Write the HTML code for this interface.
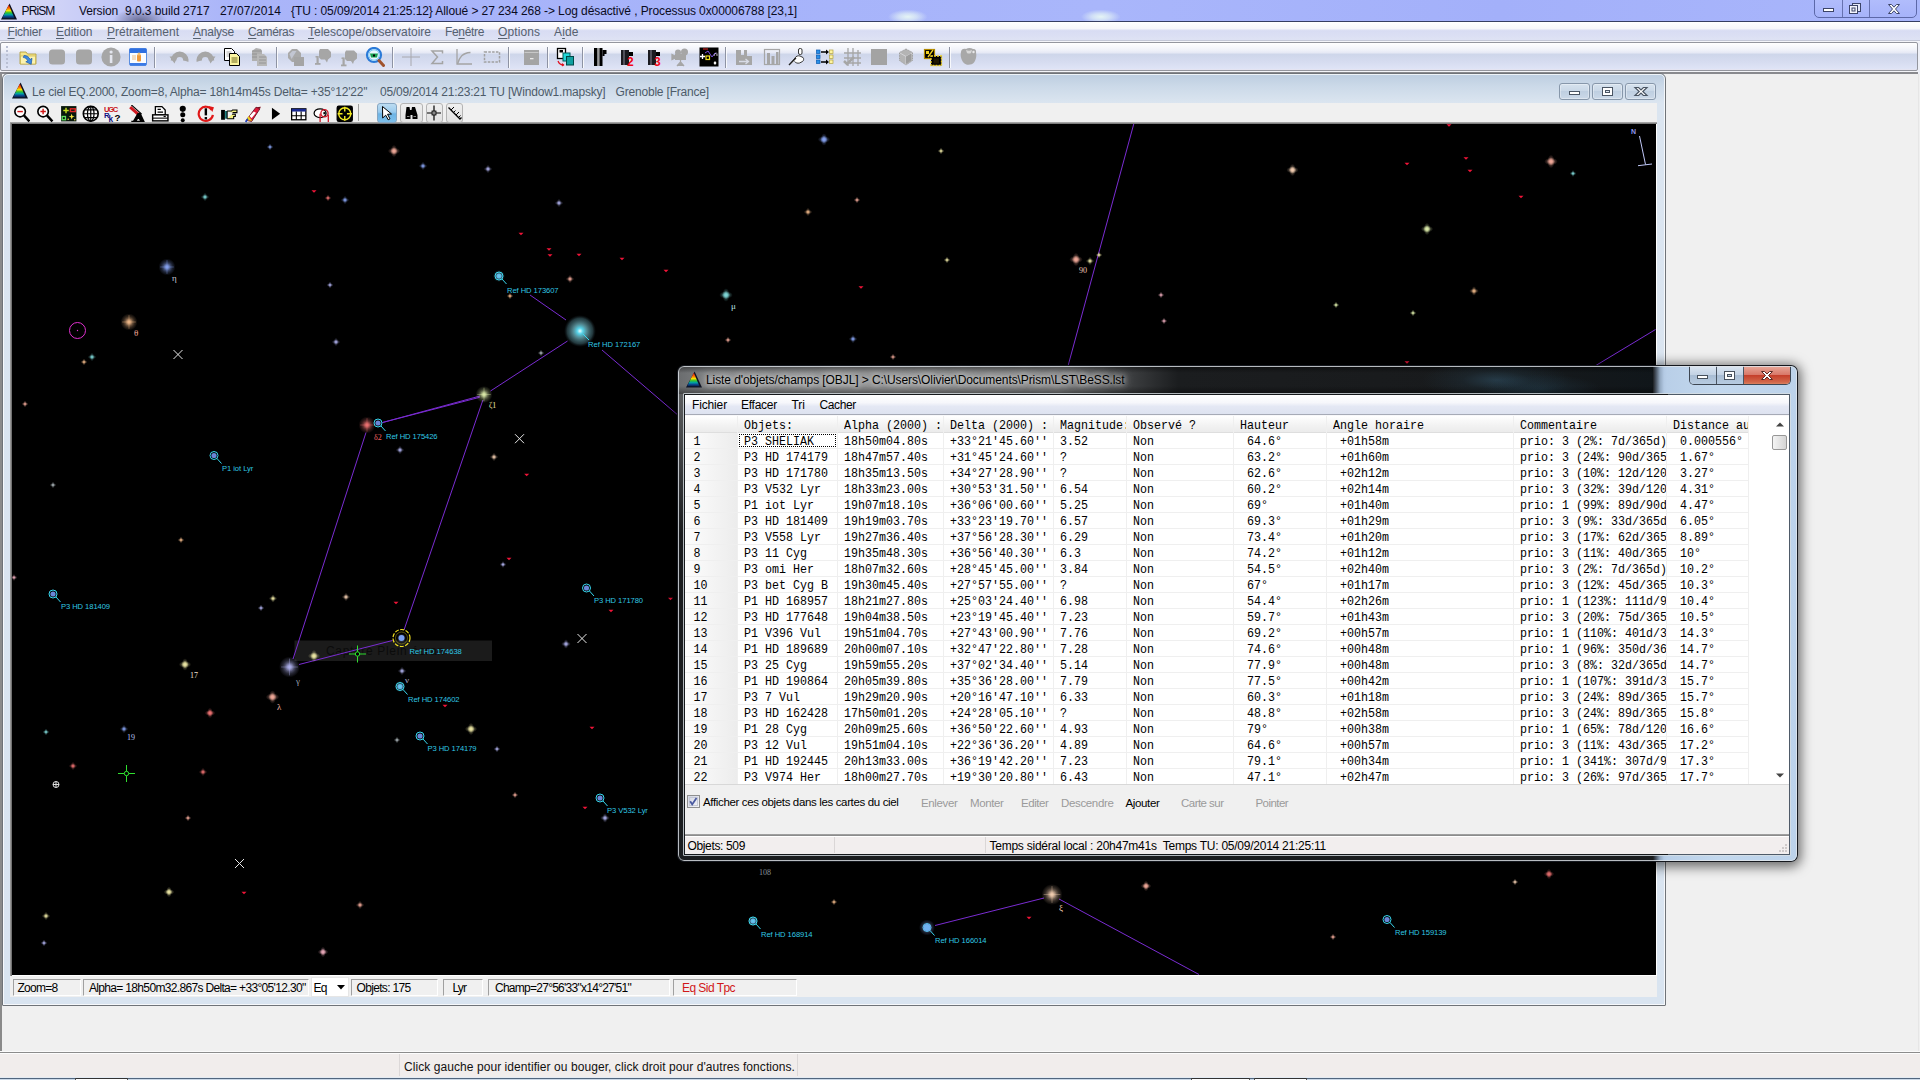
<!DOCTYPE html>
<html lang="fr"><head><meta charset="utf-8"><title>PRiSM</title>
<style>
html,body{margin:0;padding:0;}
body{width:1920px;height:1080px;overflow:hidden;position:relative;background:#f0f0f0;font-family:"Liberation Sans",sans-serif;font-size:12px;}
div,span,svg{position:absolute;box-sizing:border-box;}
span{white-space:pre;}
u{text-decoration:underline;text-underline-offset:1.5px;text-decoration-thickness:1px;}
.mono span{transform:scaleY(1.06);transform-origin:0 9.1px;font-family:"Liberation Mono",monospace;font-size:11.667px;line-height:12px;color:#000;}

.pnl{border:1px solid;border-color:#a0a0a0 #fff #fff #a0a0a0;background:#f0f0f0;}
.cb{border:1px solid #8797aa;border-radius:3px;background:linear-gradient(#d6e2ee 0%,#cad8e7 45%,#bfcfe1 50%,#cbd9e8 100%);box-shadow:inset 0 0 0 1px rgba(255,255,255,.35);}

.gl{background:#efefef;}
</style></head>
<body>
<div id="mtitle" style="left:0;top:0;width:1920px;height:21px;background:linear-gradient(90deg,#d9daf6 0px,#cfd2f7 60px,#bcc3f7 130px,#aab5f9 230px,#a6b3fa 700px,#a9b6fb 1100px,#a3b0fa 1500px,#a9b6fb 1920px);"></div>
<div style="left:888px;top:6px;width:44px;height:18px;background:radial-gradient(ellipse closest-side at 45% 60%,rgba(232,248,244,.95) 0%,rgba(225,240,245,.7) 45%,rgba(200,215,250,0) 100%);"></div>
<div style="left:1081px;top:6px;width:44px;height:18px;background:radial-gradient(ellipse closest-side at 45% 60%,rgba(232,248,244,.95) 0%,rgba(225,240,245,.7) 45%,rgba(200,215,250,0) 100%);"></div>
<div style="left:960px;top:14px;width:80px;height:8px;background:radial-gradient(ellipse closest-side at 50%% 100%%,rgba(110,110,230,.5) 0%%,rgba(120,120,230,0) 100%%);"></div>
<div style="left:112px;top:8px;width:56px;height:13px;background:radial-gradient(ellipse at 50% 100%,rgba(50,50,80,.6) 0%,rgba(60,60,90,0) 70%);"></div>
<div style="left:0;top:21px;width:1920px;height:1px;background:#363e62;"></div>
<svg style="left:1px;top:3px" width="16" height="17" viewBox="0 0 16 17"><defs><linearGradient id="pg1003" x1="0" y1="0" x2="0" y2="1"><stop offset="0" stop-color="#d81010"/><stop offset=".25" stop-color="#ff6a00"/><stop offset=".42" stop-color="#f4e400"/><stop offset=".58" stop-color="#30c030"/><stop offset=".72" stop-color="#00a0a8"/><stop offset=".85" stop-color="#0a4a90"/><stop offset="1" stop-color="#0a1a40"/></linearGradient></defs><path d="M8.600 0.500L16 16.500H0z" fill="#0c1020"/><path d="M7.800 1.800L13.600 15.500H1z" fill="url(#pg1003)"/></svg>
<span style="left:21.50px;top:4.84px;font-size:12px;line-height:12px;color:#0b0b1e;letter-spacing:-0.868px;">PRiSM</span>
<span style="left:79.00px;top:4.84px;font-size:12px;line-height:12px;color:#0b0b1e;letter-spacing:-0.147px;">Version</span>
<span style="left:125.00px;top:4.84px;font-size:12px;line-height:12px;color:#0b0b1e;letter-spacing:-0.057px;">9.0.3 build 2717</span>
<span style="left:220.00px;top:4.84px;font-size:12px;line-height:12px;color:#0b0b1e;letter-spacing:0.094px;">27/07/2014</span>
<span style="left:291.00px;top:4.84px;font-size:12px;line-height:12px;color:#0b0b1e;letter-spacing:-0.090px;">{TU : 05/09/2014 21:25:12} Alloué &gt; 27 234 268 -&gt; Log désactivé , Processus 0x00006788 [23,1]</span>
<div style="left:1814px;top:-4px;width:103px;height:22px;border:1px solid #5c68a8;border-radius:0 0 5px 5px;background:linear-gradient(#b3befc,#a6b3fa);"></div>
<div style="left:1842px;top:0;width:1px;height:17px;background:#6772b0;"></div>
<div style="left:1869px;top:0;width:1px;height:17px;background:#6772b0;"></div>
<svg style="left:1814px;top:0" width="103" height="18" viewBox="0 0 103 18"><rect x="9.5" y="8.5" width="10" height="3" fill="#fff" stroke="#3c4468" stroke-width="1"/><rect x="38.5" y="3.5" width="8" height="8" fill="#e6e9f8" stroke="#3c4468"/><rect x="35.500" y="5.500" width="8" height="8" fill="#f4f5fc" stroke="#3c4468"/><rect x="38" y="8" width="3" height="3" fill="none" stroke="#3c4468"/><path d="M74.500 4.500h3l2.500 2.700 2.500-2.700h3l-4 4.500 4 4.500h-3l-2.500-2.700-2.500 2.700h-3l4-4.500z" fill="#fff" stroke="#3c4468" stroke-width="1"/></svg>
<div style="left:0;top:22px;width:1920px;height:19px;background:linear-gradient(#ffffff 0%,#f6f6fa 36%,#e2e5f5 41%,#d8dcf3 46%,#dfe3f4 100%);"></div>
<div style="left:0;top:40px;width:1920px;height:1px;background:#c3c7d6;"></div>
<div style="left:0;top:41px;width:1920px;height:1px;background:#f4f5fa;"></div>
<span style="left:7.5px;top:25.84px;font-size:12px;line-height:12px;color:#56616f;letter-spacing:-0.215px"><u>F</u>ichier</span>
<span style="left:56px;top:25.84px;font-size:12px;line-height:12px;color:#56616f;letter-spacing:-0.028px"><u>E</u>dition</span>
<span style="left:107px;top:25.84px;font-size:12px;line-height:12px;color:#56616f;letter-spacing:-0.002px"><u>P</u>rétraitement</span>
<span style="left:193px;top:25.84px;font-size:12px;line-height:12px;color:#56616f;letter-spacing:-0.242px"><u>A</u>nalyse</span>
<span style="left:248px;top:25.84px;font-size:12px;line-height:12px;color:#56616f;letter-spacing:-0.383px"><u>C</u>améras</span>
<span style="left:308px;top:25.84px;font-size:12px;line-height:12px;color:#56616f;letter-spacing:-0.019px"><u>T</u>elescope/observatoire</span>
<span style="left:445px;top:25.84px;font-size:12px;line-height:12px;color:#56616f;letter-spacing:-0.337px">Fe<u>n</u>être</span>
<span style="left:498px;top:25.84px;font-size:12px;line-height:12px;color:#56616f;letter-spacing:0.092px"><u>O</u>ptions</span>
<span style="left:554px;top:25.84px;font-size:12px;line-height:12px;color:#56616f;letter-spacing:0.120px">A<u>i</u>de</span>
<div style="left:0;top:42px;width:1920px;height:32px;background:#eef0f7;"></div>
<div style="left:0px;top:42px;width:1918px;height:29px;border:1px solid #94969e;border-radius:2px;background:linear-gradient(#ffffff 0%,#f0f2f9 26%,#e6e9f5 36%,#ced6ea 42%,#d6dcf0 70%,#dfe4f6 96%,#e8e4ee 100%);"></div>
<div style="left:0px;top:71px;width:1918px;height:1px;background:#f3f4f8;"></div>
<div style="left:0px;top:72px;width:1918px;height:1.500px;background:#898a8e;"></div>
<div style="left:6px;top:46px;width:2px;height:2px;background:#b9bfd3;"></div>
<div style="left:6px;top:50px;width:2px;height:2px;background:#b9bfd3;"></div>
<div style="left:6px;top:54px;width:2px;height:2px;background:#b9bfd3;"></div>
<div style="left:6px;top:58px;width:2px;height:2px;background:#b9bfd3;"></div>
<div style="left:6px;top:62px;width:2px;height:2px;background:#b9bfd3;"></div>
<div style="left:6px;top:66px;width:2px;height:2px;background:#b9bfd3;"></div>
<div style="left:0;top:74px;width:1920px;height:978px;background:#f0f0f0;"></div>
<div style="left:0;top:74px;width:1.500px;height:978px;background:#8a8a8a;"></div>
<div style="left:0;top:1051px;width:1920px;height:3px;background:linear-gradient(#fbfbfb 0,#fbfbfb 33%,#8c8c8c 33%,#8c8c8c 67%,#fdfdfd 67%);"></div>
<div style="left:1918px;top:74px;width:1px;height:977px;background:#e6e6e6;"></div>
<div style="left:0;top:1054px;width:1920px;height:23px;background:#f1edec;"></div>
<div style="left:399px;top:1054px;width:1px;height:22px;background:#dcd8d8;"></div>
<div style="left:797px;top:1054px;width:1px;height:22px;background:#dcd8d8;"></div>
<span style="left:404.00px;top:1060.84px;font-size:12px;line-height:12px;color:#111;letter-spacing:0.068px;">Click gauche pour identifier ou bouger, click droit pour d'autres fonctions.</span>
<div style="left:0;top:1077px;width:1920px;height:3px;background:linear-gradient(#e4ebf3 0,#e4ebf3 33%,#52667e 40%,#52667e 67%,#cbd9e8 72%);"></div>
<div style="left:75px;top:1078px;width:53px;height:2px;background:#fff;border-top:1px solid #333;border-left:1px solid #555;border-right:1px solid #555;"></div>
<div style="left:1191px;top:1078px;width:59px;height:2px;background:#fff;border-top:1px solid #333;border-left:1px solid #555;border-right:1px solid #555;"></div>
<div style="left:1254px;top:1078px;width:53px;height:2px;background:#fff;border-top:1px solid #333;border-left:1px solid #555;border-right:1px solid #555;"></div>
<div style="left:2px;top:73px;width:1664px;height:933px;border:1px solid #6f7378;border-radius:6px 6px 1px 1px;background:linear-gradient(#bccde0 0px,#cbd9e8 12px,#dbe5f0 29px,#d9e4f0 100%);"></div>
<div style="left:3px;top:74px;width:1662px;height:931px;border:1px solid rgba(255,255,255,.75);border-radius:5px 5px 0 0;"></div>
<svg style="left:12px;top:82px" width="16" height="17" viewBox="0 0 16 17"><defs><linearGradient id="pg12082" x1="0" y1="0" x2="0" y2="1"><stop offset="0" stop-color="#d81010"/><stop offset=".25" stop-color="#ff6a00"/><stop offset=".42" stop-color="#f4e400"/><stop offset=".58" stop-color="#30c030"/><stop offset=".72" stop-color="#00a0a8"/><stop offset=".85" stop-color="#0a4a90"/><stop offset="1" stop-color="#0a1a40"/></linearGradient></defs><path d="M8.600 0.500L16 16.500H0z" fill="#0c1020"/><path d="M7.800 1.800L13.600 15.500H1z" fill="url(#pg12082)"/></svg>
<span style="left:32.00px;top:85.84px;font-size:12px;line-height:12px;color:#4d5b69;letter-spacing:-0.185px;">Le ciel EQ.2000, Zoom=8, Alpha= 18h14m45s Delta= +35°12'22''</span>
<span style="left:380.00px;top:85.84px;font-size:12px;line-height:12px;color:#4d5b69;letter-spacing:-0.199px;">05/09/2014 21:23:21 TU [Window1.mapsky]</span>
<span style="left:615.50px;top:85.84px;font-size:12px;line-height:12px;color:#4d5b69;letter-spacing:-0.189px;">Grenoble [France]</span>
<div class="cb" style="left:1559px;top:83px;width:31px;height:17px;"></div>
<div class="cb" style="left:1592px;top:83px;width:31px;height:17px;"></div>
<div class="cb" style="left:1625px;top:83px;width:31px;height:17px;"></div>
<svg style="left:1559px;top:83px" width="100" height="17" viewBox="0 0 100 17"><rect x="10.5" y="8.500" width="10" height="3" fill="#fff" stroke="#4a5563"/><rect x="43.500" y="4.500" width="10" height="8" fill="#fff" stroke="#4a5563"/><rect x="46.500" y="7.500" width="4" height="2" fill="#dfe7f0" stroke="#4a5563"/><path d="M76 4.500h3.600l2.400 2.400 2.400-2.400h3.600l-4.200 4 4.200 4h-3.600l-2.400-2.400-2.400 2.400h-3.600l4.200-4z" fill="#fff" stroke="#4a5563" stroke-width="1.200"/></svg>
<div style="left:10px;top:103px;width:1647px;height:894px;background:#f0f0f0;"></div>
<div style="left:10px;top:122px;width:1647px;height:2px;background:linear-gradient(#b8b8b8,#6a6a6a);"></div>
<div style="left:10px;top:123px;width:2px;height:853px;background:linear-gradient(90deg,#a8a8a8,#606060);"></div>
<div style="left:12px;top:124px;width:1644px;height:851px;background:#000;"></div>
<div style="left:12px;top:975px;width:1645px;height:1px;background:#fff;"></div>
<div style="left:1656px;top:124px;width:1px;height:852px;background:#fff;"></div>
<svg style="left:12px;top:124px" width="1644" height="851" viewBox="12 124 1644 851"><defs><radialGradient id="g_blue"><stop offset="0" stop-color="#86a2f0" stop-opacity=".95"/><stop offset=".3" stop-color="#86a2f0" stop-opacity=".6"/><stop offset=".65" stop-color="#86a2f0" stop-opacity=".22"/><stop offset="1" stop-color="#86a2f0" stop-opacity="0"/></radialGradient><radialGradient id="g_teal"><stop offset="0" stop-color="#7fd8d8" stop-opacity=".95"/><stop offset=".3" stop-color="#7fd8d8" stop-opacity=".6"/><stop offset=".65" stop-color="#7fd8d8" stop-opacity=".22"/><stop offset="1" stop-color="#7fd8d8" stop-opacity="0"/></radialGradient><radialGradient id="g_salmon"><stop offset="0" stop-color="#f0a898" stop-opacity=".95"/><stop offset=".3" stop-color="#f0a898" stop-opacity=".6"/><stop offset=".65" stop-color="#f0a898" stop-opacity=".22"/><stop offset="1" stop-color="#f0a898" stop-opacity="0"/></radialGradient><radialGradient id="g_orange"><stop offset="0" stop-color="#f0b888" stop-opacity=".95"/><stop offset=".3" stop-color="#f0b888" stop-opacity=".6"/><stop offset=".65" stop-color="#f0b888" stop-opacity=".22"/><stop offset="1" stop-color="#f0b888" stop-opacity="0"/></radialGradient><radialGradient id="g_yellow"><stop offset="0" stop-color="#ece6a4" stop-opacity=".95"/><stop offset=".3" stop-color="#ece6a4" stop-opacity=".6"/><stop offset=".65" stop-color="#ece6a4" stop-opacity=".22"/><stop offset="1" stop-color="#ece6a4" stop-opacity="0"/></radialGradient><radialGradient id="g_lav"><stop offset="0" stop-color="#aeb0ec" stop-opacity=".95"/><stop offset=".3" stop-color="#aeb0ec" stop-opacity=".6"/><stop offset=".65" stop-color="#aeb0ec" stop-opacity=".22"/><stop offset="1" stop-color="#aeb0ec" stop-opacity="0"/></radialGradient><radialGradient id="g_red"><stop offset="0" stop-color="#ee7272" stop-opacity=".95"/><stop offset=".3" stop-color="#ee7272" stop-opacity=".6"/><stop offset=".65" stop-color="#ee7272" stop-opacity=".22"/><stop offset="1" stop-color="#ee7272" stop-opacity="0"/></radialGradient><radialGradient id="g_pink"><stop offset="0" stop-color="#e8a8b8" stop-opacity=".95"/><stop offset=".3" stop-color="#e8a8b8" stop-opacity=".6"/><stop offset=".65" stop-color="#e8a8b8" stop-opacity=".22"/><stop offset="1" stop-color="#e8a8b8" stop-opacity="0"/></radialGradient><radialGradient id="g_grey"><stop offset="0" stop-color="#aab4b8" stop-opacity=".95"/><stop offset=".3" stop-color="#aab4b8" stop-opacity=".6"/><stop offset=".65" stop-color="#aab4b8" stop-opacity=".22"/><stop offset="1" stop-color="#aab4b8" stop-opacity="0"/></radialGradient><radialGradient id="g_yg"><stop offset="0" stop-color="#dcecaa" stop-opacity=".95"/><stop offset=".3" stop-color="#dcecaa" stop-opacity=".6"/><stop offset=".65" stop-color="#dcecaa" stop-opacity=".22"/><stop offset="1" stop-color="#dcecaa" stop-opacity="0"/></radialGradient><radialGradient id="g_peach"><stop offset="0" stop-color="#f2cdb0" stop-opacity=".95"/><stop offset=".3" stop-color="#f2cdb0" stop-opacity=".6"/><stop offset=".65" stop-color="#f2cdb0" stop-opacity=".22"/><stop offset="1" stop-color="#f2cdb0" stop-opacity="0"/></radialGradient><radialGradient id="g_cyan"><stop offset="0" stop-color="#60d8f0" stop-opacity=".95"/><stop offset=".3" stop-color="#60d8f0" stop-opacity=".6"/><stop offset=".65" stop-color="#60d8f0" stop-opacity=".22"/><stop offset="1" stop-color="#60d8f0" stop-opacity="0"/></radialGradient><radialGradient id="g_white"><stop offset="0" stop-color="#ffffff" stop-opacity=".95"/><stop offset=".3" stop-color="#ffffff" stop-opacity=".6"/><stop offset=".65" stop-color="#ffffff" stop-opacity=".22"/><stop offset="1" stop-color="#ffffff" stop-opacity="0"/></radialGradient><radialGradient id="g_vega"><stop offset="0" stop-color="#e8ffff"/><stop offset=".18" stop-color="#58d4ea"/><stop offset=".45" stop-color="#5f9aa4" stop-opacity=".85"/><stop offset=".8" stop-color="#3a5e66" stop-opacity=".6"/><stop offset="1" stop-color="#1a2a30" stop-opacity="0"/></radialGradient></defs><rect x="294.500" y="640.500" width="197.500" height="20.500" fill="#1b1b1b"/><text x="326" y="655" font-family="Liberation Sans,sans-serif" font-size="12" fill="#0b0b0b" textLength="118">Capture Plein écran</text><line x1="530" y1="295" x2="566" y2="320" stroke="#7a2cd2" stroke-width="1"/><line x1="567.5" y1="341" x2="490.5" y2="391" stroke="#7a2cd2" stroke-width="1"/><line x1="602" y1="350" x2="679" y2="416" stroke="#7a2cd2" stroke-width="1"/><line x1="1133.75" y1="124" x2="1068" y2="366" stroke="#7a2cd2" stroke-width="1"/><line x1="1655.5" y1="329.5" x2="1595" y2="366" stroke="#7a2cd2" stroke-width="1"/><line x1="480" y1="396" x2="382.5" y2="422.5" stroke="#7a2cd2" stroke-width="1"/><line x1="366" y1="432.5" x2="293" y2="659" stroke="#7a2cd2" stroke-width="1"/><line x1="482.9" y1="400" x2="404" y2="630" stroke="#7a2cd2" stroke-width="1"/><line x1="392.5" y1="640.5" x2="299" y2="664.5" stroke="#7a2cd2" stroke-width="1"/><line x1="479.7" y1="397.3" x2="382.5" y2="422.5" stroke="#7a2cd2" stroke-width="1"/><line x1="935" y1="925.5" x2="1044" y2="898" stroke="#7a2cd2" stroke-width="1"/><line x1="1059" y1="899" x2="1199" y2="974.5" stroke="#7a2cd2" stroke-width="1"/><ellipse cx="270" cy="147" rx="3.5" ry="1.925" fill="url(#g_blue)"/><ellipse cx="270" cy="147" rx="1.925" ry="3.5" fill="url(#g_blue)"/><ellipse cx="394" cy="151" rx="6.2" ry="3.41" fill="url(#g_salmon)"/><ellipse cx="394" cy="151" rx="3.41" ry="6.2" fill="url(#g_salmon)"/><circle cx="394" cy="151" r="3.72" fill="url(#g_salmon)"/><ellipse cx="423" cy="166" rx="4.2" ry="2.31" fill="url(#g_blue)"/><ellipse cx="423" cy="166" rx="2.31" ry="4.2" fill="url(#g_blue)"/><ellipse cx="205" cy="197" rx="4.2" ry="2.31" fill="url(#g_teal)"/><ellipse cx="205" cy="197" rx="2.31" ry="4.2" fill="url(#g_teal)"/><ellipse cx="328" cy="198" rx="3.5" ry="1.925" fill="url(#g_red)"/><ellipse cx="328" cy="198" rx="1.925" ry="3.5" fill="url(#g_red)"/><ellipse cx="345" cy="200" rx="4.2" ry="2.31" fill="url(#g_blue)"/><ellipse cx="345" cy="200" rx="2.31" ry="4.2" fill="url(#g_blue)"/><circle cx="167" cy="267" r="8.5" fill="url(#g_blue)"/><path d="M160.2 267h13.6M167 260.2v13.6" stroke="#86a2f0" stroke-opacity=".35" stroke-width="1"/><circle cx="167" cy="267" r="3.825" fill="url(#g_blue)"/><ellipse cx="330" cy="285" rx="3.5" ry="1.925" fill="url(#g_lav)"/><ellipse cx="330" cy="285" rx="1.925" ry="3.5" fill="url(#g_lav)"/><circle cx="129" cy="322" r="8.5" fill="url(#g_orange)"/><path d="M122.2 322h13.6M129 315.2v13.6" stroke="#f0b888" stroke-opacity=".35" stroke-width="1"/><circle cx="129" cy="322" r="3.825" fill="url(#g_orange)"/><ellipse cx="336" cy="342" rx="4.2" ry="2.31" fill="url(#g_lav)"/><ellipse cx="336" cy="342" rx="2.31" ry="4.2" fill="url(#g_lav)"/><ellipse cx="92" cy="357" rx="4.2" ry="2.31" fill="url(#g_teal)"/><ellipse cx="92" cy="357" rx="2.31" ry="4.2" fill="url(#g_teal)"/><ellipse cx="84" cy="362" rx="3.5" ry="1.925" fill="url(#g_orange)"/><ellipse cx="84" cy="362" rx="1.925" ry="3.5" fill="url(#g_orange)"/><ellipse cx="824" cy="139.5" rx="6.2" ry="3.41" fill="url(#g_blue)"/><ellipse cx="824" cy="139.5" rx="3.41" ry="6.2" fill="url(#g_blue)"/><circle cx="824" cy="139.5" r="3.72" fill="url(#g_blue)"/><ellipse cx="941" cy="151" rx="3.5" ry="1.925" fill="url(#g_yellow)"/><ellipse cx="941" cy="151" rx="1.925" ry="3.5" fill="url(#g_yellow)"/><ellipse cx="488" cy="169" rx="4.2" ry="2.31" fill="url(#g_lav)"/><ellipse cx="488" cy="169" rx="2.31" ry="4.2" fill="url(#g_lav)"/><ellipse cx="559" cy="203" rx="4.2" ry="2.31" fill="url(#g_lav)"/><ellipse cx="559" cy="203" rx="2.31" ry="4.2" fill="url(#g_lav)"/><ellipse cx="857" cy="200" rx="3.5" ry="1.925" fill="url(#g_salmon)"/><ellipse cx="857" cy="200" rx="1.925" ry="3.5" fill="url(#g_salmon)"/><ellipse cx="808" cy="212" rx="4.2" ry="2.31" fill="url(#g_orange)"/><ellipse cx="808" cy="212" rx="2.31" ry="4.2" fill="url(#g_orange)"/><ellipse cx="947" cy="260" rx="3.5" ry="1.925" fill="url(#g_yellow)"/><ellipse cx="947" cy="260" rx="1.925" ry="3.5" fill="url(#g_yellow)"/><ellipse cx="570" cy="279" rx="4.2" ry="2.31" fill="url(#g_salmon)"/><ellipse cx="570" cy="279" rx="2.31" ry="4.2" fill="url(#g_salmon)"/><ellipse cx="510" cy="296" rx="3.5" ry="1.925" fill="url(#g_orange)"/><ellipse cx="510" cy="296" rx="1.925" ry="3.5" fill="url(#g_orange)"/><ellipse cx="726" cy="295" rx="6.8" ry="3.74" fill="url(#g_teal)"/><ellipse cx="726" cy="295" rx="3.74" ry="6.8" fill="url(#g_teal)"/><circle cx="726" cy="295" r="4.08" fill="url(#g_teal)"/><ellipse cx="728" cy="340" rx="3.5" ry="1.925" fill="url(#g_salmon)"/><ellipse cx="728" cy="340" rx="1.925" ry="3.5" fill="url(#g_salmon)"/><ellipse cx="853" cy="339" rx="4.2" ry="2.31" fill="url(#g_blue)"/><ellipse cx="853" cy="339" rx="2.31" ry="4.2" fill="url(#g_blue)"/><ellipse cx="893" cy="357" rx="3.5" ry="1.925" fill="url(#g_salmon)"/><ellipse cx="893" cy="357" rx="1.925" ry="3.5" fill="url(#g_salmon)"/><ellipse cx="541" cy="353" rx="3.5" ry="1.925" fill="url(#g_grey)"/><ellipse cx="541" cy="353" rx="1.925" ry="3.5" fill="url(#g_grey)"/><ellipse cx="1292.5" cy="170" rx="6.2" ry="3.41" fill="url(#g_peach)"/><ellipse cx="1292.5" cy="170" rx="3.41" ry="6.2" fill="url(#g_peach)"/><circle cx="1292.5" cy="170" r="3.72" fill="url(#g_peach)"/><ellipse cx="1427" cy="229" rx="6.2" ry="3.41" fill="url(#g_yg)"/><ellipse cx="1427" cy="229" rx="3.41" ry="6.2" fill="url(#g_yg)"/><circle cx="1427" cy="229" r="3.72" fill="url(#g_yg)"/><ellipse cx="1076" cy="259.5" rx="6.8" ry="3.74" fill="url(#g_salmon)"/><ellipse cx="1076" cy="259.5" rx="3.74" ry="6.8" fill="url(#g_salmon)"/><circle cx="1076" cy="259.5" r="4.08" fill="url(#g_salmon)"/><ellipse cx="1090" cy="261" rx="4.2" ry="2.31" fill="url(#g_yellow)"/><ellipse cx="1090" cy="261" rx="2.31" ry="4.2" fill="url(#g_yellow)"/><ellipse cx="1099" cy="255" rx="3.5" ry="1.925" fill="url(#g_yellow)"/><ellipse cx="1099" cy="255" rx="1.925" ry="3.5" fill="url(#g_yellow)"/><ellipse cx="1161" cy="295" rx="3.5" ry="1.925" fill="url(#g_pink)"/><ellipse cx="1161" cy="295" rx="1.925" ry="3.5" fill="url(#g_pink)"/><ellipse cx="1164" cy="321" rx="3.5" ry="1.925" fill="url(#g_pink)"/><ellipse cx="1164" cy="321" rx="1.925" ry="3.5" fill="url(#g_pink)"/><ellipse cx="1336" cy="305" rx="3.5" ry="1.925" fill="url(#g_yg)"/><ellipse cx="1336" cy="305" rx="1.925" ry="3.5" fill="url(#g_yg)"/><ellipse cx="1413" cy="313" rx="3.5" ry="1.925" fill="url(#g_yg)"/><ellipse cx="1413" cy="313" rx="1.925" ry="3.5" fill="url(#g_yg)"/><ellipse cx="1551" cy="161.5" rx="6.8" ry="3.74" fill="url(#g_salmon)"/><ellipse cx="1551" cy="161.5" rx="3.74" ry="6.8" fill="url(#g_salmon)"/><circle cx="1551" cy="161.5" r="4.08" fill="url(#g_salmon)"/><ellipse cx="1573" cy="173.5" rx="3.5" ry="1.925" fill="url(#g_teal)"/><ellipse cx="1573" cy="173.5" rx="1.925" ry="3.5" fill="url(#g_teal)"/><ellipse cx="1474" cy="291" rx="4.8" ry="2.64" fill="url(#g_orange)"/><ellipse cx="1474" cy="291" rx="2.64" ry="4.8" fill="url(#g_orange)"/><ellipse cx="25" cy="404" rx="3.5" ry="1.925" fill="url(#g_salmon)"/><ellipse cx="25" cy="404" rx="1.925" ry="3.5" fill="url(#g_salmon)"/><ellipse cx="53" cy="485" rx="3.5" ry="1.925" fill="url(#g_grey)"/><ellipse cx="53" cy="485" rx="1.925" ry="3.5" fill="url(#g_grey)"/><ellipse cx="14" cy="577.5" rx="3.5" ry="1.925" fill="url(#g_pink)"/><ellipse cx="14" cy="577.5" rx="1.925" ry="3.5" fill="url(#g_pink)"/><ellipse cx="181" cy="540" rx="3.5" ry="1.925" fill="url(#g_orange)"/><ellipse cx="181" cy="540" rx="1.925" ry="3.5" fill="url(#g_orange)"/><ellipse cx="273" cy="598.5" rx="4.2" ry="2.31" fill="url(#g_yellow)"/><ellipse cx="273" cy="598.5" rx="2.31" ry="4.2" fill="url(#g_yellow)"/><ellipse cx="261" cy="608" rx="3.5" ry="1.925" fill="url(#g_lav)"/><ellipse cx="261" cy="608" rx="1.925" ry="3.5" fill="url(#g_lav)"/><ellipse cx="346" cy="597" rx="4.2" ry="2.31" fill="url(#g_peach)"/><ellipse cx="346" cy="597" rx="2.31" ry="4.2" fill="url(#g_peach)"/><circle cx="367" cy="425" r="8.5" fill="url(#g_red)"/><path d="M360.2 425h13.6M367 418.2v13.6" stroke="#ee7272" stroke-opacity=".35" stroke-width="1"/><circle cx="367" cy="425" r="3.825" fill="url(#g_red)"/><ellipse cx="400" cy="450" rx="4.2" ry="2.31" fill="url(#g_lav)"/><ellipse cx="400" cy="450" rx="2.31" ry="4.2" fill="url(#g_lav)"/><ellipse cx="503" cy="564.5" rx="3.5" ry="1.925" fill="url(#g_lav)"/><ellipse cx="503" cy="564.5" rx="1.925" ry="3.5" fill="url(#g_lav)"/><ellipse cx="314" cy="656" rx="6.2" ry="3.41" fill="url(#g_yellow)"/><ellipse cx="314" cy="656" rx="3.41" ry="6.2" fill="url(#g_yellow)"/><circle cx="314" cy="656" r="3.72" fill="url(#g_yellow)"/><circle cx="289.5" cy="667" r="10.5" fill="url(#g_lav)"/><path d="M281.1 667h16.8M289.5 658.6v16.8" stroke="#aeb0ec" stroke-opacity=".35" stroke-width="1"/><circle cx="289.5" cy="667" r="4.725" fill="url(#g_lav)"/><ellipse cx="272.5" cy="697" rx="6.8" ry="3.74" fill="url(#g_salmon)"/><ellipse cx="272.5" cy="697" rx="3.74" ry="6.8" fill="url(#g_salmon)"/><circle cx="272.5" cy="697" r="4.08" fill="url(#g_salmon)"/><ellipse cx="402" cy="671" rx="4.2" ry="2.31" fill="url(#g_lav)"/><ellipse cx="402" cy="671" rx="2.31" ry="4.2" fill="url(#g_lav)"/><ellipse cx="471" cy="729" rx="6.2" ry="3.41" fill="url(#g_yellow)"/><ellipse cx="471" cy="729" rx="3.41" ry="6.2" fill="url(#g_yellow)"/><circle cx="471" cy="729" r="3.72" fill="url(#g_yellow)"/><ellipse cx="397" cy="740" rx="3.5" ry="1.925" fill="url(#g_grey)"/><ellipse cx="397" cy="740" rx="1.925" ry="3.5" fill="url(#g_grey)"/><ellipse cx="497" cy="749" rx="3.5" ry="1.925" fill="url(#g_lav)"/><ellipse cx="497" cy="749" rx="1.925" ry="3.5" fill="url(#g_lav)"/><ellipse cx="566" cy="644" rx="4.8" ry="2.64" fill="url(#g_lav)"/><ellipse cx="566" cy="644" rx="2.64" ry="4.8" fill="url(#g_lav)"/><ellipse cx="515" cy="795" rx="3.5" ry="1.925" fill="url(#g_salmon)"/><ellipse cx="515" cy="795" rx="1.925" ry="3.5" fill="url(#g_salmon)"/><ellipse cx="605" cy="818" rx="4.8" ry="2.64" fill="url(#g_lav)"/><ellipse cx="605" cy="818" rx="2.64" ry="4.8" fill="url(#g_lav)"/><circle cx="484" cy="394.5" r="8.5" fill="url(#g_yg)"/><path d="M477.2 394.5h13.6M484 387.7v13.6" stroke="#dcecaa" stroke-opacity=".35" stroke-width="1"/><circle cx="484" cy="394.5" r="3.825" fill="url(#g_yg)"/><ellipse cx="494" cy="457" rx="4.2" ry="2.31" fill="url(#g_peach)"/><ellipse cx="494" cy="457" rx="2.31" ry="4.2" fill="url(#g_peach)"/><ellipse cx="185" cy="664.5" rx="6.2" ry="3.41" fill="url(#g_yellow)"/><ellipse cx="185" cy="664.5" rx="3.41" ry="6.2" fill="url(#g_yellow)"/><circle cx="185" cy="664.5" r="3.72" fill="url(#g_yellow)"/><ellipse cx="210" cy="713" rx="5.4" ry="2.97" fill="url(#g_red)"/><ellipse cx="210" cy="713" rx="2.97" ry="5.4" fill="url(#g_red)"/><circle cx="210" cy="713" r="3.24" fill="url(#g_red)"/><ellipse cx="124" cy="729" rx="4.2" ry="2.31" fill="url(#g_blue)"/><ellipse cx="124" cy="729" rx="2.31" ry="4.2" fill="url(#g_blue)"/><ellipse cx="46" cy="732" rx="3.5" ry="1.925" fill="url(#g_teal)"/><ellipse cx="46" cy="732" rx="1.925" ry="3.5" fill="url(#g_teal)"/><ellipse cx="73" cy="766" rx="4.2" ry="2.31" fill="url(#g_red)"/><ellipse cx="73" cy="766" rx="2.31" ry="4.2" fill="url(#g_red)"/><ellipse cx="203" cy="772" rx="4.2" ry="2.31" fill="url(#g_red)"/><ellipse cx="203" cy="772" rx="2.31" ry="4.2" fill="url(#g_red)"/><ellipse cx="188" cy="818" rx="3.5" ry="1.925" fill="url(#g_salmon)"/><ellipse cx="188" cy="818" rx="1.925" ry="3.5" fill="url(#g_salmon)"/><ellipse cx="169" cy="892" rx="5.4" ry="2.97" fill="url(#g_yellow)"/><ellipse cx="169" cy="892" rx="2.97" ry="5.4" fill="url(#g_yellow)"/><circle cx="169" cy="892" r="3.24" fill="url(#g_yellow)"/><ellipse cx="360" cy="905" rx="4.2" ry="2.31" fill="url(#g_salmon)"/><ellipse cx="360" cy="905" rx="2.31" ry="4.2" fill="url(#g_salmon)"/><ellipse cx="46" cy="916" rx="4.2" ry="2.31" fill="url(#g_yellow)"/><ellipse cx="46" cy="916" rx="2.31" ry="4.2" fill="url(#g_yellow)"/><ellipse cx="44" cy="943" rx="3.5" ry="1.925" fill="url(#g_lav)"/><ellipse cx="44" cy="943" rx="1.925" ry="3.5" fill="url(#g_lav)"/><ellipse cx="323" cy="952" rx="5.4" ry="2.97" fill="url(#g_pink)"/><ellipse cx="323" cy="952" rx="2.97" ry="5.4" fill="url(#g_pink)"/><circle cx="323" cy="952" r="3.24" fill="url(#g_pink)"/><ellipse cx="834" cy="902" rx="3.5" ry="1.925" fill="url(#g_orange)"/><ellipse cx="834" cy="902" rx="1.925" ry="3.5" fill="url(#g_orange)"/><circle cx="1052" cy="894.5" r="10.5" fill="url(#g_peach)"/><path d="M1043.6 894.5h16.8M1052 886.1v16.8" stroke="#f2cdb0" stroke-opacity=".35" stroke-width="1"/><circle cx="1052" cy="894.5" r="4.725" fill="url(#g_peach)"/><ellipse cx="1146" cy="886" rx="5.4" ry="2.97" fill="url(#g_salmon)"/><ellipse cx="1146" cy="886" rx="2.97" ry="5.4" fill="url(#g_salmon)"/><circle cx="1146" cy="886" r="3.24" fill="url(#g_salmon)"/><ellipse cx="1333" cy="937" rx="3.5" ry="1.925" fill="url(#g_salmon)"/><ellipse cx="1333" cy="937" rx="1.925" ry="3.5" fill="url(#g_salmon)"/><ellipse cx="1549" cy="874" rx="5.4" ry="2.97" fill="url(#g_red)"/><ellipse cx="1549" cy="874" rx="2.97" ry="5.4" fill="url(#g_red)"/><circle cx="1549" cy="874" r="3.24" fill="url(#g_red)"/><ellipse cx="1515" cy="882" rx="3.5" ry="1.925" fill="url(#g_peach)"/><ellipse cx="1515" cy="882" rx="1.925" ry="3.5" fill="url(#g_peach)"/><circle cx="580" cy="331" r="16" fill="url(#g_vega)"/><path d="M311.5 190.2h5l-2.500 2.600z" fill="#f01438"/><path d="M518.5 232.7h5l-2.500 2.600z" fill="#f01438"/><path d="M546.5 248.2h5l-2.500 2.600z" fill="#f01438"/><path d="M547.5 254.2h5l-2.500 2.600z" fill="#f01438"/><path d="M576.5 253.7h5l-2.500 2.600z" fill="#f01438"/><path d="M619.5 257.7h5l-2.500 2.600z" fill="#f01438"/><path d="M663.5 269.7h5l-2.500 2.600z" fill="#f01438"/><path d="M858.5 286.2h5l-2.500 2.600z" fill="#f01438"/><path d="M1404.5 162.7h5l-2.500 2.600z" fill="#f01438"/><path d="M1404.5 361.2h5l-2.500 2.600z" fill="#f01438"/><path d="M1446.5 124.2h5l-2.500 2.600z" fill="#f01438"/><path d="M1463.5 157.2h5l-2.500 2.600z" fill="#f01438"/><path d="M1467.5 169.7h5l-2.500 2.600z" fill="#f01438"/><path d="M1518.5 195.7h5l-2.500 2.600z" fill="#f01438"/><path d="M393.5 601.7h5l-2.500 2.600z" fill="#f01438"/><path d="M442.5 704.7h5l-2.500 2.600z" fill="#f01438"/><path d="M668 597.7h5l-2.500 2.600z" fill="#f01438"/><path d="M608.5 609.7h5l-2.500 2.600z" fill="#f01438"/><path d="M589.5 726.7h5l-2.500 2.600z" fill="#f01438"/><path d="M582.5 806.7h5l-2.500 2.600z" fill="#f01438"/><path d="M524.2 473.7h5l-2.500 2.600z" fill="#f01438"/><path d="M506.5 557.7h5l-2.500 2.600z" fill="#f01438"/><path d="M241.5 891.7h5l-2.500 2.600z" fill="#f01438"/><path d="M1026.5 916.7h5l-2.500 2.600z" fill="#f01438"/><path d="M173.5 350l9 9M182.5 350l-9 9" stroke="#e8e8e8" stroke-width="1"/><path d="M515 434.2l9 9M524 434.2l-9 9" stroke="#e8e8e8" stroke-width="1"/><path d="M577.5 634l9 9M586.5 634l-9 9" stroke="#e8e8e8" stroke-width="1"/><path d="M235 859l9 9M244 859l-9 9" stroke="#e8e8e8" stroke-width="1"/><circle cx="77.500" cy="330.500" r="8" fill="none" stroke="#e030d0" stroke-width="1"/><circle cx="77.500" cy="330.500" r=".7" fill="#e030d0"/><path d="M349 654h17M357.5 645.5v17" stroke="#30e030" stroke-width="1"/><circle cx="357.5" cy="654" r="2.200" fill="#000" stroke="#30e030"/><path d="M118 773.5h17M126.5 765v17" stroke="#30e030" stroke-width="1"/><circle cx="126.5" cy="773.5" r="2.200" fill="#000" stroke="#30e030"/><circle cx="56" cy="784.500" r="3" fill="none" stroke="#e0e0e0"/><path d="M53 784.500h6M56 781.500v6" stroke="#e0e0e0"/><text x="1631" y="134" font-family="Liberation Sans,sans-serif" font-size="7" fill="#9098f0" font-weight="bold">N</text><path d="M1639.500 136L1645.500 164.500M1638 165.700L1652 164" stroke="#c0c8f8" stroke-width="1" fill="none"/><circle cx="499" cy="276" r="2.600" fill="#6a86d8"/><circle cx="499" cy="276" r="4" fill="none" stroke="#38d8f0" stroke-width="1"/><path d="M501.9 278.9L506.5 284" stroke="#38d8f0" stroke-width="1"/><text x="507" y="293" font-family="Liberation Sans,sans-serif" font-size="7.600" fill="#30c8e4" textLength="51.6">Ref HD 173607</text><circle cx="378" cy="423" r="2.600" fill="#6a86d8"/><circle cx="378" cy="423" r="4" fill="none" stroke="#38d8f0" stroke-width="1"/><path d="M380.9 425.9L385.5 431" stroke="#38d8f0" stroke-width="1"/><text x="386" y="439" font-family="Liberation Sans,sans-serif" font-size="7.600" fill="#30c8e4" textLength="51.6">Ref HD 175426</text><circle cx="214" cy="455.5" r="2.600" fill="#6a86d8"/><circle cx="214" cy="455.5" r="4" fill="none" stroke="#38d8f0" stroke-width="1"/><path d="M216.9 458.4L221.5 463.5" stroke="#38d8f0" stroke-width="1"/><text x="222" y="471" font-family="Liberation Sans,sans-serif" font-size="7.600" fill="#30c8e4" textLength="31.3">P1 iot Lyr</text><circle cx="53" cy="594" r="2.600" fill="#6a86d8"/><circle cx="53" cy="594" r="4" fill="none" stroke="#38d8f0" stroke-width="1"/><path d="M55.9 596.9L60.5 602" stroke="#38d8f0" stroke-width="1"/><text x="61" y="609" font-family="Liberation Sans,sans-serif" font-size="7.600" fill="#30c8e4" textLength="49.1">P3 HD 181409</text><circle cx="400" cy="686.5" r="2.600" fill="#6a86d8"/><circle cx="400" cy="686.5" r="4" fill="none" stroke="#38d8f0" stroke-width="1"/><path d="M402.9 689.4L407.5 694.5" stroke="#38d8f0" stroke-width="1"/><text x="408" y="702" font-family="Liberation Sans,sans-serif" font-size="7.600" fill="#30c8e4" textLength="51.6">Ref HD 174602</text><circle cx="420" cy="736" r="2.600" fill="#6a86d8"/><circle cx="420" cy="736" r="4" fill="none" stroke="#38d8f0" stroke-width="1"/><path d="M422.9 738.9L427.5 744" stroke="#38d8f0" stroke-width="1"/><text x="427.5" y="751" font-family="Liberation Sans,sans-serif" font-size="7.600" fill="#30c8e4" textLength="49.1">P3 HD 174179</text><circle cx="586.5" cy="588" r="2.600" fill="#6a86d8"/><circle cx="586.5" cy="588" r="4" fill="none" stroke="#38d8f0" stroke-width="1"/><path d="M589.4 590.9L594 596" stroke="#38d8f0" stroke-width="1"/><text x="594" y="603" font-family="Liberation Sans,sans-serif" font-size="7.600" fill="#30c8e4" textLength="49.1">P3 HD 171780</text><circle cx="600" cy="798" r="2.600" fill="#6a86d8"/><circle cx="600" cy="798" r="4" fill="none" stroke="#38d8f0" stroke-width="1"/><path d="M602.9 800.9L607.5 806" stroke="#38d8f0" stroke-width="1"/><text x="607" y="813" font-family="Liberation Sans,sans-serif" font-size="7.600" fill="#30c8e4" textLength="40.9">P3 V532 Lyr</text><circle cx="753" cy="921" r="2.600" fill="#6a86d8"/><circle cx="753" cy="921" r="4" fill="none" stroke="#38d8f0" stroke-width="1"/><path d="M755.9 923.9L760.5 929" stroke="#38d8f0" stroke-width="1"/><text x="761" y="937" font-family="Liberation Sans,sans-serif" font-size="7.600" fill="#30c8e4" textLength="51.6">Ref HD 168914</text><circle cx="927" cy="927.5" r="2.600" fill="#6a86d8"/><circle cx="927" cy="927.5" r="4" fill="none" stroke="#38d8f0" stroke-width="1"/><path d="M929.9 930.4L934.5 935.5" stroke="#38d8f0" stroke-width="1"/><text x="935" y="943" font-family="Liberation Sans,sans-serif" font-size="7.600" fill="#30c8e4" textLength="51.6">Ref HD 166014</text><circle cx="1387" cy="919.5" r="2.600" fill="#6a86d8"/><circle cx="1387" cy="919.5" r="4" fill="none" stroke="#38d8f0" stroke-width="1"/><path d="M1389.9 922.4L1394.5 927.5" stroke="#38d8f0" stroke-width="1"/><text x="1395" y="935" font-family="Liberation Sans,sans-serif" font-size="7.600" fill="#30c8e4" textLength="51.6">Ref HD 159139</text><circle cx="401.500" cy="638" r="4.500" fill="url(#g_blue)"/><circle cx="401.500" cy="638" r="3" fill="#7aa0f0"/><circle cx="401.500" cy="638" r="8.500" fill="none" stroke="#f0e020" stroke-width="1.200" stroke-dasharray="4 1.500"/><circle cx="401.500" cy="638" r="6" fill="none" stroke="#f0e020" stroke-width=".6" stroke-opacity=".6"/><text x="409.500" y="654" font-family="Liberation Sans,sans-serif" font-size="7.600" fill="#30c8e4">Ref HD 174638</text><text x="588" y="347" font-family="Liberation Sans,sans-serif" font-size="7.600" fill="#30c8e4">Ref HD 172167</text><path d="M583 334l6 6" stroke="#38d8f0"/><circle cx="927" cy="927.500" r="8" fill="url(#g_blue)"/><circle cx="927" cy="927.500" r="3.500" fill="#70b0f0"/><circle cx="499" cy="276" r="6" fill="url(#g_cyan)"/><circle cx="753" cy="921" r="5.500" fill="url(#g_cyan)"/><circle cx="400" cy="686.500" r="5.500" fill="url(#g_cyan)"/><text x="172" y="281" font-family="Liberation Serif,serif" font-size="9" fill="#c8c8d8">η</text><text x="134" y="336" font-family="Liberation Serif,serif" font-size="9" fill="#f0a898">θ</text><text x="731" y="309" font-family="Liberation Serif,serif" font-size="9" fill="#b8e0e0">μ</text><text x="1079" y="273" font-family="Liberation Serif,serif" font-size="8" fill="#f0c8b8">90</text><text x="374" y="440" font-family="Liberation Serif,serif" font-size="8" fill="#f06060">δ2</text><text x="489" y="408" font-family="Liberation Serif,serif" font-size="8" fill="#ece6a4">ζ1</text><text x="296" y="683.5" font-family="Liberation Serif,serif" font-size="9" fill="#9aa0b4">γ</text><text x="277" y="710" font-family="Liberation Serif,serif" font-size="9" fill="#f0b8a8">λ</text><text x="405" y="683" font-family="Liberation Serif,serif" font-size="9" fill="#b0b4d8">ν</text><text x="190" y="678" font-family="Liberation Serif,serif" font-size="8" fill="#f0e0d0">17</text><text x="127" y="740" font-family="Liberation Serif,serif" font-size="8" fill="#b8c0f0">19</text><text x="759" y="875" font-family="Liberation Serif,serif" font-size="8" fill="#9aa0a8">108</text><text x="1059" y="911" font-family="Liberation Serif,serif" font-size="9" fill="#f2cdb0">ξ</text></svg>
<div class="pnl" style="left:12.5px;top:978.500px;width:68.5px;height:17.500px;"></div>
<div class="pnl" style="left:83px;top:978.500px;width:226px;height:17.500px;"></div>
<div class="pnl" style="left:351px;top:978.500px;width:87px;height:17.500px;"></div>
<div class="pnl" style="left:442.5px;top:978.500px;width:40px;height:17.500px;"></div>
<div class="pnl" style="left:488px;top:978.500px;width:182px;height:17.500px;"></div>
<div class="pnl" style="left:673px;top:978.500px;width:124px;height:17.500px;"></div>
<div style="left:311px;top:977px;width:38px;height:20px;background:#fff;border:1px solid #e6e6e6;"></div>
<svg style="left:337px;top:985px" width="8" height="5"><path d="M0 0h8l-4 4.500z" fill="#000"/></svg>
<span style="left:17.50px;top:981.84px;font-size:12px;line-height:12px;color:#000;letter-spacing:-0.726px;">Zoom=8</span>
<span style="left:89.00px;top:981.84px;font-size:12px;line-height:12px;color:#000;letter-spacing:-0.668px;">Alpha= 18h50m32.867s Delta= +33°05'12.30"</span>
<span style="left:313.50px;top:981.84px;font-size:12px;line-height:12px;color:#000;letter-spacing:-0.839px;">Eq</span>
<span style="left:356.50px;top:981.84px;font-size:12px;line-height:12px;color:#000;letter-spacing:-0.670px;">Objets: 175</span>
<span style="left:452.50px;top:981.84px;font-size:12px;line-height:12px;color:#000;letter-spacing:-0.908px;">Lyr</span>
<span style="left:495.00px;top:981.84px;font-size:12px;line-height:12px;color:#000;letter-spacing:-0.739px;">Champ=27°56'33"x14°27'51"</span>
<span style="left:682.00px;top:981.84px;font-size:12px;line-height:12px;color:#d01818;letter-spacing:-0.548px;">Eq Sid Tpc</span>
<div style="left:677px;top:365px;width:1121px;height:497px;border-radius:7px;box-shadow:0 2px 12px 3px rgba(0,0,0,.55);"></div>
<div id="dlg" style="left:677px;top:365px;width:1121px;height:497px;border-radius:7px;overflow:hidden;border:1px solid rgba(20,24,30,.85);background:#1b1d1f;">
<div style="left:0;top:0;width:1119px;height:495px;border:1px solid rgba(225,230,235,.8);border-radius:6px;z-index:3;"></div>
<div style="left:0;top:0;width:1121px;height:28px;background:linear-gradient(90deg,#6a6c6e 0px,#7e8082 30px,#8a8b8c 200px,#7a7b7c 380px,#3a3c3e 455px,#1b1d1f 500px,#181a1c 800px,#10161a 978px);"></div>
<div style="left:0;top:0;width:1121px;height:28px;background:linear-gradient(180deg,rgba(0,0,0,.45) 0px,rgba(0,0,0,0) 7px,rgba(0,0,0,0) 20px,rgba(0,0,0,.4) 28px);"></div>
<div style="left:743px;top:-6px;width:150px;height:40px;background:radial-gradient(ellipse closest-side at 50% 50%,rgba(60,110,140,.38) 0%,rgba(40,75,95,.2) 45%,rgba(0,0,0,0) 100%);"></div>
<div style="left:803px;top:8px;width:120px;height:30px;background:radial-gradient(ellipse closest-side at 50% 50%,rgba(50,100,130,.22) 0%,rgba(0,0,0,0) 100%);"></div>
<div style="left:0;top:28px;width:8px;height:140px;background:linear-gradient(#5c5e60,#1b1d1f);"></div>
<div style="left:979px;top:0;width:142px;height:497px;background:linear-gradient(90deg,#9fb4cc 0px,#b9cfe8 10px,#c3d8ee 60px,#bcd2ea 140px);"></div>
<div style="left:975px;top:0;width:14px;height:497px;background:linear-gradient(90deg,#1b1d1f 0px,#4a5563 3px,#93a8c0 7px,#b4cae4 11px,#b9cfe8 14px);"></div>
</div>
<div style="left:683px;top:393px;width:1108px;height:463px;border:1px solid rgba(215,222,228,.8);border-radius:1px;"></div>
<div style="left:684px;top:394px;width:1106px;height:461px;border:1px solid #15181b;"></div>
<div style="left:1668px;top:394px;width:122px;height:461px;border:1px solid #4e5a68;border-left:none;"></div>
<div style="left:685px;top:395px;width:1104px;height:459px;background:#f0f0f0;"></div>
<svg style="left:686px;top:371px" width="16" height="17" viewBox="0 0 16 17"><defs><linearGradient id="pg686371" x1="0" y1="0" x2="0" y2="1"><stop offset="0" stop-color="#d81010"/><stop offset=".25" stop-color="#ff6a00"/><stop offset=".42" stop-color="#f4e400"/><stop offset=".58" stop-color="#30c030"/><stop offset=".72" stop-color="#00a0a8"/><stop offset=".85" stop-color="#0a4a90"/><stop offset="1" stop-color="#0a1a40"/></linearGradient></defs><path d="M8.600 0.500L16 16.500H0z" fill="#0c1020"/><path d="M7.800 1.800L13.600 15.500H1z" fill="url(#pg686371)"/></svg>
<span style="left:706.00px;top:373.84px;font-size:12px;line-height:12px;color:#000;letter-spacing:-0.091px;text-shadow:0 0 5px rgba(255,255,255,.9),0 0 9px rgba(255,255,255,.7),0 0 14px rgba(255,255,255,.5);">Liste d'objets/champs [OBJL] &gt; C:\Users\Olivier\Documents\Prism\LST\BeSS.lst</span>
<div style="left:1689px;top:366px;width:102px;height:19px;border:1px solid #3d4652;border-top:none;border-radius:0 0 5px 5px;overflow:hidden;background:#c6d6e8;"><div style="left:0;top:0;width:27px;height:19px;background:linear-gradient(#dbe6f2 0%,#c3d2e4 45%,#a9bdd4 50%,#b9cde2 100%);border-right:1px solid #4a5563;"></div><div style="left:27px;top:0;width:27px;height:19px;background:linear-gradient(#dbe6f2 0%,#c3d2e4 45%,#a9bdd4 50%,#b9cde2 100%);border-right:1px solid #4a5563;"></div><div style="left:54px;top:0;width:48px;height:19px;background:linear-gradient(#e8a99a 0%,#d9796a 45%,#c5402c 50%,#d2674a 85%,#e0906c 100%);"></div></div>
<svg style="left:1689px;top:366px" width="102" height="19" viewBox="0 0 102 19"><rect x="8.500" y="9.500" width="10" height="3" fill="#fff" stroke="#47505c"/><rect x="35.500" y="5.500" width="10" height="8" fill="#fff" stroke="#47505c"/><rect x="38.500" y="8.500" width="4" height="2" fill="#c6d6e8" stroke="#47505c"/><path d="M72.500 5.500h3l2.500 2.500 2.500-2.500h3l-4 4 4 4h-3l-2.500-2.500-2.500 2.500h-3l4-4z" fill="#fff" stroke="#5a2a24"/></svg>
<div style="left:685px;top:395px;width:1104px;height:19px;background:linear-gradient(#ffffff 0%,#f6f7fb 40%,#e4e8f4 60%,#dde2f0 100%);"></div>
<div style="left:685px;top:414px;width:1104px;height:1px;background:#a6aab6;"></div>
<div style="left:685px;top:415px;width:1104px;height:1px;background:#f8f8fa;"></div>
<span style="left:692.00px;top:398.84px;font-size:12px;line-height:12px;color:#000;letter-spacing:-0.144px;">Fichier</span>
<span style="left:741.00px;top:398.84px;font-size:12px;line-height:12px;color:#000;letter-spacing:-0.257px;">Effacer</span>
<span style="left:791.50px;top:398.84px;font-size:12px;line-height:12px;color:#000;letter-spacing:-0.016px;">Tri</span>
<span style="left:819.50px;top:398.84px;font-size:12px;line-height:12px;color:#000;letter-spacing:-0.364px;">Cacher</span>
<div style="left:685px;top:416px;width:1104px;height:368px;background:#fff;"></div>
<div style="left:685px;top:416px;width:1063px;height:16px;background:linear-gradient(#ffffff,#f4f4f4 50%,#ebebeb);"></div>
<div style="left:685px;top:433px;width:52px;height:351px;background:linear-gradient(90deg,#fdfdfd,#ececec);"></div>
<div class="gl" style="left:685px;top:432px;width:1063px;height:1px;background:#dedede;"></div>
<div class="gl" style="left:685px;top:448px;width:1063px;height:1px;"></div>
<div class="gl" style="left:685px;top:464px;width:1063px;height:1px;"></div>
<div class="gl" style="left:685px;top:480px;width:1063px;height:1px;"></div>
<div class="gl" style="left:685px;top:496px;width:1063px;height:1px;"></div>
<div class="gl" style="left:685px;top:512px;width:1063px;height:1px;"></div>
<div class="gl" style="left:685px;top:528px;width:1063px;height:1px;"></div>
<div class="gl" style="left:685px;top:544px;width:1063px;height:1px;"></div>
<div class="gl" style="left:685px;top:560px;width:1063px;height:1px;"></div>
<div class="gl" style="left:685px;top:576px;width:1063px;height:1px;"></div>
<div class="gl" style="left:685px;top:592px;width:1063px;height:1px;"></div>
<div class="gl" style="left:685px;top:608px;width:1063px;height:1px;"></div>
<div class="gl" style="left:685px;top:624px;width:1063px;height:1px;"></div>
<div class="gl" style="left:685px;top:640px;width:1063px;height:1px;"></div>
<div class="gl" style="left:685px;top:656px;width:1063px;height:1px;"></div>
<div class="gl" style="left:685px;top:672px;width:1063px;height:1px;"></div>
<div class="gl" style="left:685px;top:688px;width:1063px;height:1px;"></div>
<div class="gl" style="left:685px;top:704px;width:1063px;height:1px;"></div>
<div class="gl" style="left:685px;top:720px;width:1063px;height:1px;"></div>
<div class="gl" style="left:685px;top:736px;width:1063px;height:1px;"></div>
<div class="gl" style="left:685px;top:752px;width:1063px;height:1px;"></div>
<div class="gl" style="left:685px;top:768px;width:1063px;height:1px;"></div>
<div class="gl" style="left:685px;top:784px;width:1063px;height:1px;"></div>
<div class="gl" style="left:737px;top:416px;width:1px;height:368px;"></div>
<div class="gl" style="left:837px;top:416px;width:1px;height:368px;"></div>
<div class="gl" style="left:943px;top:416px;width:1px;height:368px;"></div>
<div class="gl" style="left:1053px;top:416px;width:1px;height:368px;"></div>
<div class="gl" style="left:1126px;top:416px;width:1px;height:368px;"></div>
<div class="gl" style="left:1233px;top:416px;width:1px;height:368px;"></div>
<div class="gl" style="left:1326px;top:416px;width:1px;height:368px;"></div>
<div class="gl" style="left:1513px;top:416px;width:1px;height:368px;"></div>
<div class="gl" style="left:1666px;top:416px;width:1px;height:368px;"></div>
<div class="gl" style="left:1748px;top:416px;width:1px;height:368px;"></div>
<div style="left:685px;top:784px;width:1104px;height:1px;background:#d8d8d8;"></div>
<div class="mono" style="left:0;top:0;width:1920px;height:1080px;">
<span style="left:744px;top:420.00px;">Objets:</span>
<span style="left:844px;top:420.00px;">Alpha (2000) :</span>
<span style="left:950px;top:420.00px;">Delta (2000) :</span>
<div style="left:1060px;top:420.00px;width:66px;height:14px;overflow:hidden;"><span style="left:0;top:0;">Magnitude:</span></div>
<span style="left:1133px;top:420.00px;">Observé ?</span>
<span style="left:1240px;top:420.00px;">Hauteur</span>
<span style="left:1333px;top:420.00px;">Angle horaire</span>
<span style="left:1520px;top:420.00px;">Commentaire</span>
<div style="left:1673px;top:420.00px;width:75px;height:14px;overflow:hidden;"><span style="left:0;top:0;">Distance au</span></div>
<span style="left:693.5px;top:436.00px;">1</span>
<span style="left:744px;top:436.00px;">P3 SHELIAK</span>
<span style="left:844px;top:436.00px;">18h50m04.80s</span>
<span style="left:950px;top:436.00px;">+33°21'45.60''</span>
<span style="left:1060px;top:436.00px;">3.52</span>
<span style="left:1133px;top:436.00px;">Non</span>
<span style="left:1240px;top:436.00px;"> 64.6°</span>
<span style="left:1333px;top:436.00px;"> +01h58m</span>
<div style="left:1520px;top:436.00px;width:146px;height:14px;overflow:hidden;"><span style="left:0;top:0;">prio: 3 (2%: 7d/365d)</span></div>
<div style="left:1673px;top:436.00px;width:75px;height:14px;overflow:hidden;"><span style="left:0;top:0;"> 0.000556°</span></div>
<span style="left:693.5px;top:452.00px;">2</span>
<span style="left:744px;top:452.00px;">P3 HD 174179</span>
<span style="left:844px;top:452.00px;">18h47m57.40s</span>
<span style="left:950px;top:452.00px;">+31°45'24.60''</span>
<span style="left:1060px;top:452.00px;">?</span>
<span style="left:1133px;top:452.00px;">Non</span>
<span style="left:1240px;top:452.00px;"> 63.2°</span>
<span style="left:1333px;top:452.00px;"> +01h60m</span>
<div style="left:1520px;top:452.00px;width:146px;height:14px;overflow:hidden;"><span style="left:0;top:0;">prio: 3 (24%: 90d/365d)</span></div>
<div style="left:1673px;top:452.00px;width:75px;height:14px;overflow:hidden;"><span style="left:0;top:0;"> 1.67°</span></div>
<span style="left:693.5px;top:468.00px;">3</span>
<span style="left:744px;top:468.00px;">P3 HD 171780</span>
<span style="left:844px;top:468.00px;">18h35m13.50s</span>
<span style="left:950px;top:468.00px;">+34°27'28.90''</span>
<span style="left:1060px;top:468.00px;">?</span>
<span style="left:1133px;top:468.00px;">Non</span>
<span style="left:1240px;top:468.00px;"> 62.6°</span>
<span style="left:1333px;top:468.00px;"> +02h12m</span>
<div style="left:1520px;top:468.00px;width:146px;height:14px;overflow:hidden;"><span style="left:0;top:0;">prio: 3 (10%: 12d/120d)</span></div>
<div style="left:1673px;top:468.00px;width:75px;height:14px;overflow:hidden;"><span style="left:0;top:0;"> 3.27°</span></div>
<span style="left:693.5px;top:484.00px;">4</span>
<span style="left:744px;top:484.00px;">P3 V532 Lyr</span>
<span style="left:844px;top:484.00px;">18h33m23.00s</span>
<span style="left:950px;top:484.00px;">+30°53'31.50''</span>
<span style="left:1060px;top:484.00px;">6.54</span>
<span style="left:1133px;top:484.00px;">Non</span>
<span style="left:1240px;top:484.00px;"> 60.2°</span>
<span style="left:1333px;top:484.00px;"> +02h14m</span>
<div style="left:1520px;top:484.00px;width:146px;height:14px;overflow:hidden;"><span style="left:0;top:0;">prio: 3 (32%: 39d/120d)</span></div>
<div style="left:1673px;top:484.00px;width:75px;height:14px;overflow:hidden;"><span style="left:0;top:0;"> 4.31°</span></div>
<span style="left:693.5px;top:500.00px;">5</span>
<span style="left:744px;top:500.00px;">P1 iot Lyr</span>
<span style="left:844px;top:500.00px;">19h07m18.10s</span>
<span style="left:950px;top:500.00px;">+36°06'00.60''</span>
<span style="left:1060px;top:500.00px;">5.25</span>
<span style="left:1133px;top:500.00px;">Non</span>
<span style="left:1240px;top:500.00px;"> 69°</span>
<span style="left:1333px;top:500.00px;"> +01h40m</span>
<div style="left:1520px;top:500.00px;width:146px;height:14px;overflow:hidden;"><span style="left:0;top:0;">prio: 1 (99%: 89d/90d)</span></div>
<div style="left:1673px;top:500.00px;width:75px;height:14px;overflow:hidden;"><span style="left:0;top:0;"> 4.47°</span></div>
<span style="left:693.5px;top:516.00px;">6</span>
<span style="left:744px;top:516.00px;">P3 HD 181409</span>
<span style="left:844px;top:516.00px;">19h19m03.70s</span>
<span style="left:950px;top:516.00px;">+33°23'19.70''</span>
<span style="left:1060px;top:516.00px;">6.57</span>
<span style="left:1133px;top:516.00px;">Non</span>
<span style="left:1240px;top:516.00px;"> 69.3°</span>
<span style="left:1333px;top:516.00px;"> +01h29m</span>
<div style="left:1520px;top:516.00px;width:146px;height:14px;overflow:hidden;"><span style="left:0;top:0;">prio: 3 (9%: 33d/365d)</span></div>
<div style="left:1673px;top:516.00px;width:75px;height:14px;overflow:hidden;"><span style="left:0;top:0;"> 6.05°</span></div>
<span style="left:693.5px;top:532.00px;">7</span>
<span style="left:744px;top:532.00px;">P3 V558 Lyr</span>
<span style="left:844px;top:532.00px;">19h27m36.40s</span>
<span style="left:950px;top:532.00px;">+37°56'28.30''</span>
<span style="left:1060px;top:532.00px;">6.29</span>
<span style="left:1133px;top:532.00px;">Non</span>
<span style="left:1240px;top:532.00px;"> 73.4°</span>
<span style="left:1333px;top:532.00px;"> +01h20m</span>
<div style="left:1520px;top:532.00px;width:146px;height:14px;overflow:hidden;"><span style="left:0;top:0;">prio: 3 (17%: 62d/365d)</span></div>
<div style="left:1673px;top:532.00px;width:75px;height:14px;overflow:hidden;"><span style="left:0;top:0;"> 8.89°</span></div>
<span style="left:693.5px;top:548.00px;">8</span>
<span style="left:744px;top:548.00px;">P3 11 Cyg</span>
<span style="left:844px;top:548.00px;">19h35m48.30s</span>
<span style="left:950px;top:548.00px;">+36°56'40.30''</span>
<span style="left:1060px;top:548.00px;">6.3</span>
<span style="left:1133px;top:548.00px;">Non</span>
<span style="left:1240px;top:548.00px;"> 74.2°</span>
<span style="left:1333px;top:548.00px;"> +01h12m</span>
<div style="left:1520px;top:548.00px;width:146px;height:14px;overflow:hidden;"><span style="left:0;top:0;">prio: 3 (11%: 40d/365d)</span></div>
<div style="left:1673px;top:548.00px;width:75px;height:14px;overflow:hidden;"><span style="left:0;top:0;"> 10°</span></div>
<span style="left:693.5px;top:564.00px;">9</span>
<span style="left:744px;top:564.00px;">P3 omi Her</span>
<span style="left:844px;top:564.00px;">18h07m32.60s</span>
<span style="left:950px;top:564.00px;">+28°45'45.00''</span>
<span style="left:1060px;top:564.00px;">3.84</span>
<span style="left:1133px;top:564.00px;">Non</span>
<span style="left:1240px;top:564.00px;"> 54.5°</span>
<span style="left:1333px;top:564.00px;"> +02h40m</span>
<div style="left:1520px;top:564.00px;width:146px;height:14px;overflow:hidden;"><span style="left:0;top:0;">prio: 3 (2%: 7d/365d)</span></div>
<div style="left:1673px;top:564.00px;width:75px;height:14px;overflow:hidden;"><span style="left:0;top:0;"> 10.2°</span></div>
<span style="left:693.5px;top:580.00px;">10</span>
<span style="left:744px;top:580.00px;">P3 bet Cyg B</span>
<span style="left:844px;top:580.00px;">19h30m45.40s</span>
<span style="left:950px;top:580.00px;">+27°57'55.00''</span>
<span style="left:1060px;top:580.00px;">?</span>
<span style="left:1133px;top:580.00px;">Non</span>
<span style="left:1240px;top:580.00px;"> 67°</span>
<span style="left:1333px;top:580.00px;"> +01h17m</span>
<div style="left:1520px;top:580.00px;width:146px;height:14px;overflow:hidden;"><span style="left:0;top:0;">prio: 3 (12%: 45d/365d)</span></div>
<div style="left:1673px;top:580.00px;width:75px;height:14px;overflow:hidden;"><span style="left:0;top:0;"> 10.3°</span></div>
<span style="left:693.5px;top:596.00px;">11</span>
<span style="left:744px;top:596.00px;">P1 HD 168957</span>
<span style="left:844px;top:596.00px;">18h21m27.80s</span>
<span style="left:950px;top:596.00px;">+25°03'24.40''</span>
<span style="left:1060px;top:596.00px;">6.98</span>
<span style="left:1133px;top:596.00px;">Non</span>
<span style="left:1240px;top:596.00px;"> 54.4°</span>
<span style="left:1333px;top:596.00px;"> +02h26m</span>
<div style="left:1520px;top:596.00px;width:146px;height:14px;overflow:hidden;"><span style="left:0;top:0;">prio: 1 (123%: 111d/90d)</span></div>
<div style="left:1673px;top:596.00px;width:75px;height:14px;overflow:hidden;"><span style="left:0;top:0;"> 10.4°</span></div>
<span style="left:693.5px;top:612.00px;">12</span>
<span style="left:744px;top:612.00px;">P3 HD 177648</span>
<span style="left:844px;top:612.00px;">19h04m38.50s</span>
<span style="left:950px;top:612.00px;">+23°19'45.40''</span>
<span style="left:1060px;top:612.00px;">7.23</span>
<span style="left:1133px;top:612.00px;">Non</span>
<span style="left:1240px;top:612.00px;"> 59.7°</span>
<span style="left:1333px;top:612.00px;"> +01h43m</span>
<div style="left:1520px;top:612.00px;width:146px;height:14px;overflow:hidden;"><span style="left:0;top:0;">prio: 3 (20%: 75d/365d)</span></div>
<div style="left:1673px;top:612.00px;width:75px;height:14px;overflow:hidden;"><span style="left:0;top:0;"> 10.5°</span></div>
<span style="left:693.5px;top:628.00px;">13</span>
<span style="left:744px;top:628.00px;">P1 V396 Vul</span>
<span style="left:844px;top:628.00px;">19h51m04.70s</span>
<span style="left:950px;top:628.00px;">+27°43'00.90''</span>
<span style="left:1060px;top:628.00px;">7.76</span>
<span style="left:1133px;top:628.00px;">Non</span>
<span style="left:1240px;top:628.00px;"> 69.2°</span>
<span style="left:1333px;top:628.00px;"> +00h57m</span>
<div style="left:1520px;top:628.00px;width:146px;height:14px;overflow:hidden;"><span style="left:0;top:0;">prio: 1 (110%: 401d/365d)</span></div>
<div style="left:1673px;top:628.00px;width:75px;height:14px;overflow:hidden;"><span style="left:0;top:0;"> 14.3°</span></div>
<span style="left:693.5px;top:644.00px;">14</span>
<span style="left:744px;top:644.00px;">P1 HD 189689</span>
<span style="left:844px;top:644.00px;">20h00m07.10s</span>
<span style="left:950px;top:644.00px;">+32°47'22.80''</span>
<span style="left:1060px;top:644.00px;">7.28</span>
<span style="left:1133px;top:644.00px;">Non</span>
<span style="left:1240px;top:644.00px;"> 74.6°</span>
<span style="left:1333px;top:644.00px;"> +00h48m</span>
<div style="left:1520px;top:644.00px;width:146px;height:14px;overflow:hidden;"><span style="left:0;top:0;">prio: 1 (96%: 350d/365d)</span></div>
<div style="left:1673px;top:644.00px;width:75px;height:14px;overflow:hidden;"><span style="left:0;top:0;"> 14.7°</span></div>
<span style="left:693.5px;top:660.00px;">15</span>
<span style="left:744px;top:660.00px;">P3 25 Cyg</span>
<span style="left:844px;top:660.00px;">19h59m55.20s</span>
<span style="left:950px;top:660.00px;">+37°02'34.40''</span>
<span style="left:1060px;top:660.00px;">5.14</span>
<span style="left:1133px;top:660.00px;">Non</span>
<span style="left:1240px;top:660.00px;"> 77.9°</span>
<span style="left:1333px;top:660.00px;"> +00h48m</span>
<div style="left:1520px;top:660.00px;width:146px;height:14px;overflow:hidden;"><span style="left:0;top:0;">prio: 3 (8%: 32d/365d)</span></div>
<div style="left:1673px;top:660.00px;width:75px;height:14px;overflow:hidden;"><span style="left:0;top:0;"> 14.7°</span></div>
<span style="left:693.5px;top:676.00px;">16</span>
<span style="left:744px;top:676.00px;">P1 HD 190864</span>
<span style="left:844px;top:676.00px;">20h05m39.80s</span>
<span style="left:950px;top:676.00px;">+35°36'28.00''</span>
<span style="left:1060px;top:676.00px;">7.79</span>
<span style="left:1133px;top:676.00px;">Non</span>
<span style="left:1240px;top:676.00px;"> 77.5°</span>
<span style="left:1333px;top:676.00px;"> +00h42m</span>
<div style="left:1520px;top:676.00px;width:146px;height:14px;overflow:hidden;"><span style="left:0;top:0;">prio: 1 (107%: 391d/365d)</span></div>
<div style="left:1673px;top:676.00px;width:75px;height:14px;overflow:hidden;"><span style="left:0;top:0;"> 15.7°</span></div>
<span style="left:693.5px;top:692.00px;">17</span>
<span style="left:744px;top:692.00px;">P3 7 Vul</span>
<span style="left:844px;top:692.00px;">19h29m20.90s</span>
<span style="left:950px;top:692.00px;">+20°16'47.10''</span>
<span style="left:1060px;top:692.00px;">6.33</span>
<span style="left:1133px;top:692.00px;">Non</span>
<span style="left:1240px;top:692.00px;"> 60.3°</span>
<span style="left:1333px;top:692.00px;"> +01h18m</span>
<div style="left:1520px;top:692.00px;width:146px;height:14px;overflow:hidden;"><span style="left:0;top:0;">prio: 3 (24%: 89d/365d)</span></div>
<div style="left:1673px;top:692.00px;width:75px;height:14px;overflow:hidden;"><span style="left:0;top:0;"> 15.7°</span></div>
<span style="left:693.5px;top:708.00px;">18</span>
<span style="left:744px;top:708.00px;">P3 HD 162428</span>
<span style="left:844px;top:708.00px;">17h50m01.20s</span>
<span style="left:950px;top:708.00px;">+24°28'05.10''</span>
<span style="left:1060px;top:708.00px;">?</span>
<span style="left:1133px;top:708.00px;">Non</span>
<span style="left:1240px;top:708.00px;"> 48.8°</span>
<span style="left:1333px;top:708.00px;"> +02h58m</span>
<div style="left:1520px;top:708.00px;width:146px;height:14px;overflow:hidden;"><span style="left:0;top:0;">prio: 3 (24%: 89d/365d)</span></div>
<div style="left:1673px;top:708.00px;width:75px;height:14px;overflow:hidden;"><span style="left:0;top:0;"> 15.8°</span></div>
<span style="left:693.5px;top:724.00px;">19</span>
<span style="left:744px;top:724.00px;">P1 28 Cyg</span>
<span style="left:844px;top:724.00px;">20h09m25.60s</span>
<span style="left:950px;top:724.00px;">+36°50'22.60''</span>
<span style="left:1060px;top:724.00px;">4.93</span>
<span style="left:1133px;top:724.00px;">Non</span>
<span style="left:1240px;top:724.00px;"> 79°</span>
<span style="left:1333px;top:724.00px;"> +00h38m</span>
<div style="left:1520px;top:724.00px;width:146px;height:14px;overflow:hidden;"><span style="left:0;top:0;">prio: 1 (65%: 78d/120d)</span></div>
<div style="left:1673px;top:724.00px;width:75px;height:14px;overflow:hidden;"><span style="left:0;top:0;"> 16.6°</span></div>
<span style="left:693.5px;top:740.00px;">20</span>
<span style="left:744px;top:740.00px;">P3 12 Vul</span>
<span style="left:844px;top:740.00px;">19h51m04.10s</span>
<span style="left:950px;top:740.00px;">+22°36'36.20''</span>
<span style="left:1060px;top:740.00px;">4.89</span>
<span style="left:1133px;top:740.00px;">Non</span>
<span style="left:1240px;top:740.00px;"> 64.6°</span>
<span style="left:1333px;top:740.00px;"> +00h57m</span>
<div style="left:1520px;top:740.00px;width:146px;height:14px;overflow:hidden;"><span style="left:0;top:0;">prio: 3 (11%: 43d/365d)</span></div>
<div style="left:1673px;top:740.00px;width:75px;height:14px;overflow:hidden;"><span style="left:0;top:0;"> 17.2°</span></div>
<span style="left:693.5px;top:756.00px;">21</span>
<span style="left:744px;top:756.00px;">P1 HD 192445</span>
<span style="left:844px;top:756.00px;">20h13m33.00s</span>
<span style="left:950px;top:756.00px;">+36°19'42.20''</span>
<span style="left:1060px;top:756.00px;">7.23</span>
<span style="left:1133px;top:756.00px;">Non</span>
<span style="left:1240px;top:756.00px;"> 79.1°</span>
<span style="left:1333px;top:756.00px;"> +00h34m</span>
<div style="left:1520px;top:756.00px;width:146px;height:14px;overflow:hidden;"><span style="left:0;top:0;">prio: 1 (341%: 307d/90d)</span></div>
<div style="left:1673px;top:756.00px;width:75px;height:14px;overflow:hidden;"><span style="left:0;top:0;"> 17.3°</span></div>
<span style="left:693.5px;top:772.00px;">22</span>
<span style="left:744px;top:772.00px;">P3 V974 Her</span>
<span style="left:844px;top:772.00px;">18h00m27.70s</span>
<span style="left:950px;top:772.00px;">+19°30'20.80''</span>
<span style="left:1060px;top:772.00px;">6.43</span>
<span style="left:1133px;top:772.00px;">Non</span>
<span style="left:1240px;top:772.00px;"> 47.1°</span>
<span style="left:1333px;top:772.00px;"> +02h47m</span>
<div style="left:1520px;top:772.00px;width:146px;height:14px;overflow:hidden;"><span style="left:0;top:0;">prio: 3 (26%: 97d/365d)</span></div>
<div style="left:1673px;top:772.00px;width:75px;height:14px;overflow:hidden;"><span style="left:0;top:0;"> 17.7°</span></div>
</div>
<div style="left:739px;top:434px;width:97px;height:13px;border:1px dotted #000;"></div>
<div style="left:1771px;top:416px;width:17px;height:368px;background:#fff;"></div>
<svg style="left:1776px;top:422px" width="8" height="5"><path d="M0 4.500L4 .5 8 4.500z" fill="#444"/></svg>
<svg style="left:1776px;top:773px" width="8" height="5"><path d="M0 .5L4 4.500 8 .5z" fill="#444"/></svg>
<div style="left:1772px;top:435px;width:15px;height:15px;border:1px solid #979797;border-radius:2px;background:linear-gradient(90deg,#f4f4f4,#e4e4e4 50%,#d4d4d4);"></div>
<div style="left:687px;top:795px;width:13px;height:13px;border:1px solid #8e8f8f;background:linear-gradient(135deg,#d2d6e4,#f4f4f8);"></div>
<div style="left:689px;top:797px;width:9px;height:9px;border:1px solid #c4c8d4;"></div>
<svg style="left:687px;top:795px" width="13" height="13"><path d="M3.200 6.200l2 3.200 4.300-6.400" fill="none" stroke="#4a5aa0" stroke-width="1.800"/></svg>
<span style="left:703.00px;top:796.77px;font-size:11.5px;line-height:11.5px;color:#000;letter-spacing:-0.354px;">Afficher ces objets dans les cartes du ciel</span>
<span style="left:921.00px;top:797.87px;font-size:11.5px;line-height:11.5px;color:#9a9a9a;letter-spacing:-0.356px;">Enlever</span>
<span style="left:970.00px;top:797.87px;font-size:11.5px;line-height:11.5px;color:#9a9a9a;letter-spacing:-0.382px;">Monter</span>
<span style="left:1021.00px;top:797.87px;font-size:11.5px;line-height:11.5px;color:#9a9a9a;letter-spacing:-0.424px;">Editer</span>
<span style="left:1061.00px;top:797.87px;font-size:11.5px;line-height:11.5px;color:#9a9a9a;letter-spacing:-0.346px;">Descendre</span>
<span style="left:1125.50px;top:797.87px;font-size:11.5px;line-height:11.5px;color:#000;letter-spacing:-0.348px;">Ajouter</span>
<span style="left:1181.00px;top:797.87px;font-size:11.5px;line-height:11.5px;color:#9a9a9a;letter-spacing:-0.533px;">Carte sur</span>
<span style="left:1255.50px;top:797.87px;font-size:11.5px;line-height:11.5px;color:#9a9a9a;letter-spacing:-0.563px;">Pointer</span>
<div style="left:685px;top:834px;width:1104px;height:2px;background:linear-gradient(#a8a8a8,#828282);"></div>
<div style="left:685px;top:836px;width:1104px;height:18px;background:#f2eeee;border-top:1px solid #fff;"></div>
<div style="left:834px;top:837px;width:1px;height:16px;background:#dad6d6;"></div>
<div style="left:985px;top:837px;width:1px;height:16px;background:#dad6d6;"></div>
<span style="left:687.50px;top:839.84px;font-size:12px;line-height:12px;color:#000;letter-spacing:-0.352px;">Objets: 509</span>
<span style="left:989.50px;top:839.84px;font-size:12px;line-height:12px;color:#000;letter-spacing:-0.243px;">Temps sidéral local : 20h47m41s  Temps TU: 05/09/2014 21:25:11</span>
<div style="left:1785px;top:850px;width:2px;height:2px;background:#cfcaca;"></div>
<div style="left:1782px;top:850px;width:2px;height:2px;background:#cfcaca;"></div>
<div style="left:1785px;top:847px;width:2px;height:2px;background:#cfcaca;"></div>
<div style="left:1779px;top:850px;width:2px;height:2px;background:#cfcaca;"></div>
<div style="left:1782px;top:847px;width:2px;height:2px;background:#cfcaca;"></div>
<div style="left:1785px;top:844px;width:2px;height:2px;background:#cfcaca;"></div>
<svg style="left:18px;top:47px" width="20" height="20" viewBox="0 0 20 20"><path d="M2 5h6l1.500 2H18v10H2z" fill="#f4e58a" stroke="#b09a30" stroke-width=".8"/><path d="M2.500 9h15v8h-15z" fill="#fbf3b0" stroke="#c0aa40" stroke-width=".6"/><path d="M6 8.500c3 0 5 1.500 6 4l2-1.200-.8 6-5.400-2.500 2-1c-1-2-2.300-3-4.500-3.300z" fill="#3d8ae0" stroke="#1a55a8" stroke-width=".7"/></svg>
<svg style="left:46.5px;top:47px" width="20" height="20" viewBox="0 0 20 20"><rect x="2" y="2.500" width="16" height="15" rx="3.500" fill="#a6a6a6"/></svg>
<svg style="left:74px;top:47px" width="20" height="20" viewBox="0 0 20 20"><rect x="2" y="2.500" width="16" height="15" rx="3.500" fill="#a6a6a6"/></svg>
<svg style="left:100.5px;top:47px" width="20" height="20" viewBox="0 0 20 20"><circle cx="10" cy="10" r="9.600" fill="#a6a6a6"/><rect x="8.800" y="8" width="2.600" height="8" fill="#e4e6ee"/><circle cx="10.100" cy="5" r="1.600" fill="#e4e6ee"/></svg>
<svg style="left:127.5px;top:47px" width="20" height="20" viewBox="0 0 20 20"><rect x="1.500" y="1.500" width="17" height="17" rx="1.500" fill="#fafcff" stroke="#5a8ee0"/><rect x="1.500" y="1.500" width="17" height="4.500" fill="#2f6fe0"/><rect x="2" y="16" width="16" height="2.500" fill="#3b7ae6"/><rect x="9" y="7.500" width="4" height="7" rx="1" fill="#f09838"/><circle cx="11" cy="7" r="1.500" fill="#f8c070"/><rect x="4" y="8" width="4" height="5" fill="#f4dcc0"/></svg>
<svg style="left:168.5px;top:47px" width="20" height="20" viewBox="0 0 20 20"><path d="M4.500 13.500a6.200 6.200 0 0 1 12.400 0" fill="none" stroke="#a6a6a6" stroke-width="5.500"/><path d="M0.500 9.500h8l-3 7z" fill="#a6a6a6"/><path d="M14 13l5.500 2-1-5z" fill="#a6a6a6"/></svg>
<svg style="left:195.5px;top:47px" width="20" height="20" viewBox="0 0 20 20"><g transform="translate(20 0) scale(-1 1)"><path d="M4.500 13.500a6.200 6.200 0 0 1 12.400 0" fill="none" stroke="#a6a6a6" stroke-width="5.500"/><path d="M0.500 9.500h8l-3 7z" fill="#a6a6a6"/><path d="M14 13l5.500 2-1-5z" fill="#a6a6a6"/></g></svg>
<svg style="left:222px;top:47px" width="20" height="20" viewBox="0 0 20 20"><path d="M2.500 1.500h7l3 3v9h-10z" fill="#fff" stroke="#000"/><path d="M4.500 5h5M4.500 7h5M4.500 9h4" stroke="#9a9a9a" stroke-width=".8"/><path d="M7.500 6.500h7l3 3v9h-10z" fill="#fcf6a0" stroke="#000"/><path d="M9.500 11h6M9.500 13h6M9.500 15h6" stroke="#706820" stroke-width="1"/></svg>
<svg style="left:249px;top:47px" width="20" height="20" viewBox="0 0 20 20"><path d="M3 4l4-3 5 1 1 3v9H3z" fill="#b0b0b0"/><path d="M8 7h7l3 3v9H8z" fill="#b8b8b8"/><path d="M3 4h10M3 7h5M3 10h5M10 10h7M10 13h7M10 16h7" stroke="#8e8e8e" stroke-width=".8"/></svg>
<svg style="left:286px;top:47px" width="20" height="20" viewBox="0 0 20 20"><path d="M2 6l4-4h5l4 4v5l-4 4H6l-4-4z" fill="#a9a9a9"/><path d="M3.500 7l3-3h4l-5 8z" fill="#c2c6d2"/><rect x="8" y="10" width="10" height="9" fill="#a4a4a4"/></svg>
<svg style="left:313px;top:47px" width="20" height="20" viewBox="0 0 20 20"><path d="M7 2h8l3 3v5l-3 2.500-1 3-2-3H8l-2-2V4z" fill="#a6a6a6"/><rect x="3.500" y="9" width="2.200" height="8" fill="#a6a6a6"/><rect x="2" y="16" width="5.500" height="1.800" fill="#a6a6a6"/><rect x="2.500" y="9" width="2" height="1.500" fill="#a6a6a6"/></svg>
<svg style="left:339px;top:47px" width="20" height="20" viewBox="0 0 20 20"><g transform="translate(0 1.500)"><path d="M7 2h8l3 3v5l-3 2.500-1 3-2-3H8l-2-2V4z" fill="#a6a6a6"/><rect x="3.500" y="9" width="2.200" height="8" fill="#a6a6a6"/><rect x="2" y="16" width="5.500" height="1.800" fill="#a6a6a6"/><rect x="2.500" y="9" width="2" height="1.500" fill="#a6a6a6"/></g></svg>
<svg style="left:365px;top:47px" width="20" height="20" viewBox="0 0 20 20"><circle cx="9" cy="8" r="7" fill="#e8f6ff" stroke="#2a7ad8" stroke-width="2.200"/><circle cx="9" cy="8" r="5.200" fill="none" stroke="#7cc8f4" stroke-width="1"/><path d="M5 6.500h8l-1 4H6z" fill="#18a050"/><rect x="8" y="7.500" width="2" height="2" fill="#000"/><path d="M14 13.500l4.500 5" stroke="#a0522d" stroke-width="3" stroke-linecap="round"/></svg>
<svg style="left:401px;top:47px" width="20" height="20" viewBox="0 0 20 20"><path d="M1 10h18M10 1v18" stroke="#a8a8ae" stroke-width="1"/></svg>
<svg style="left:427px;top:47px" width="20" height="20" viewBox="0 0 20 20"><path d="M15.500 6.500V4H5l5.500 6L5 16.500h10.500V14" fill="none" stroke="#a4a4a4" stroke-width="1.500"/></svg>
<svg style="left:453.5px;top:47px" width="20" height="20" viewBox="0 0 20 20"><path d="M3 2v15h15" fill="none" stroke="#a4a4a4" stroke-width="1.300"/><path d="M3.500 17c2-7 5-11 13-11.500" fill="none" stroke="#a4a4a4" stroke-width="1.300"/></svg>
<svg style="left:482px;top:47px" width="20" height="20" viewBox="0 0 20 20"><rect x="2.500" y="5" width="15" height="10" fill="none" stroke="#a0a0a0" stroke-width="1.500" stroke-dasharray="2.500 1.300"/></svg>
<svg style="left:520.5px;top:47px" width="20" height="20" viewBox="0 0 20 20"><rect x="3" y="3" width="15" height="15" fill="#a4a4a4"/><path d="M3.500 5.500h14" stroke="#c8c8c8" stroke-width="1"/><rect x="9" y="11" width="3.500" height="1.300" fill="#e8e8e8"/></svg>
<svg style="left:556px;top:47px" width="20" height="20" viewBox="0 0 20 20"><rect x="1.500" y="1.500" width="8" height="10" fill="#fff" stroke="#000" stroke-width="1.300"/><rect x="3.500" y="3" width="3.500" height="2.500" fill="#000"/><rect x="7" y="6" width="7" height="8" fill="#20d8d8" stroke="#005858"/><rect x="10.500" y="9.500" width="7" height="8.500" fill="#10a0a0" stroke="#004848"/><path d="M2 14c1 3 3 4 6 4" fill="none" stroke="#e01020" stroke-width="1.200"/><path d="M8.500 18l-2.500-2v3.500z" fill="#e01020"/></svg>
<svg style="left:590px;top:47px" width="20" height="20" viewBox="0 0 20 20"><rect x="4" y="1" width="3.500" height="18" fill="#000"/><rect x="7.500" y="1" width="2" height="18" fill="#9a9a9a"/><rect x="9.500" y="1" width="3" height="18" fill="#000"/><path d="M12.500 3h4v4h-2v2h-2z" fill="#000"/></svg>
<svg style="left:617.5px;top:47px" width="20" height="20" viewBox="0 0 20 20"><rect x="3" y="3" width="8" height="15" fill="#1a1a20"/><rect x="5" y="3" width="2" height="15" fill="#50505a"/><rect x="11" y="5" width="4" height="4" fill="#000"/><text x="9" y="18.500" font-family="Liberation Sans,sans-serif" font-weight="bold" font-size="12" fill="#f00818">2</text></svg>
<svg style="left:645px;top:47px" width="20" height="20" viewBox="0 0 20 20"><rect x="3" y="3" width="8" height="15" fill="#1a1a20"/><rect x="5" y="3" width="2" height="15" fill="#50505a"/><rect x="11" y="5" width="4" height="4" fill="#000"/><text x="9" y="18.500" font-family="Liberation Sans,sans-serif" font-weight="bold" font-size="12" fill="#f00818">3</text></svg>
<svg style="left:671px;top:47px" width="20" height="20" viewBox="0 0 20 20"><circle cx="7" cy="5.500" r="3" fill="#a6a6a6"/><circle cx="13.500" cy="5" r="3.500" fill="#a6a6a6"/><rect x="4" y="7" width="11" height="6" fill="#a6a6a6"/><path d="M4 9l-3-1.500v5l3-1.500zM9.500 13v5M6 19l3.500-4 3.500 4" fill="#a6a6a6" stroke="#a6a6a6" stroke-width="1.300"/></svg>
<svg style="left:698.5px;top:47px" width="20" height="20" viewBox="0 0 20 20"><rect x="0.500" y="0.500" width="19" height="19" fill="#000"/><path d="M4 2h5" stroke="#e02020" stroke-width="1"/><path d="M6 6l3-2 4 6 3-4 1.500 1" fill="none" stroke="#7a50e0" stroke-width="1"/><path d="M1 9.500h5M3.500 7v5" stroke="#fff" stroke-width="1.300"/><rect x="7" y="9" width="3.500" height="3.500" fill="none" stroke="#f0e020" stroke-width="1.200"/><path d="M16 14l1.500 2-1.500 2-1.500-2z" fill="#fff"/><path d="M15 9c.5-2 1.500-3 2.500-3M18 6.500V9" stroke="#e0e0e0" stroke-width=".8" fill="none"/></svg>
<svg style="left:734px;top:47px" width="20" height="20" viewBox="0 0 20 20"><path d="M2 3h5v5h3V3h3v6h5v9H2z" fill="#a6a6a6"/><path d="M5 14.500h9M11.500 12l3 2.500-3 2.500" stroke="#d8dbe6" stroke-width="1.300" fill="none"/></svg>
<svg style="left:761.5px;top:47px" width="20" height="20" viewBox="0 0 20 20"><rect x="2.500" y="2.500" width="15" height="15" fill="none" stroke="#a6a6a6" stroke-width="1.200"/><rect x="5" y="6" width="3" height="11" fill="#a6a6a6"/><rect x="9.500" y="9" width="3" height="8" fill="#a6a6a6"/><rect x="14" y="5" width="2.500" height="12" fill="#a6a6a6"/></svg>
<svg style="left:787.5px;top:47px" width="20" height="20" viewBox="0 0 20 20"><rect x="10.500" y="1.500" width="3.500" height="6" rx="1.500" fill="#fff" stroke="#222" stroke-width=".9"/><path d="M1 18l6-7c1-2 3-2.500 5-2l3 1.500c1 1 .8 3-.5 4l-3 1.500c-2 .5-3.500 0-5-1.500" fill="#fff" stroke="#222" stroke-width=".9"/><path d="M1 18l7-7" stroke="#222" stroke-width="1.200"/></svg>
<svg style="left:815px;top:47px" width="20" height="20" viewBox="0 0 20 20"><rect x="1.500" y="3" width="3.500" height="3.500" fill="#2890e8" stroke="#0858b0" stroke-width=".7"/><rect x="14.500" y="3" width="3.500" height="3.500" fill="#fff4a0" stroke="#b0a040" stroke-width=".7"/><rect x="1.500" y="8" width="3.500" height="3.500" fill="#2890e8" stroke="#0858b0" stroke-width=".7"/><rect x="14.500" y="8" width="3.500" height="3.500" fill="#fff4a0" stroke="#b0a040" stroke-width=".7"/><rect x="1.500" y="13" width="3.500" height="3.500" fill="#2890e8" stroke="#0858b0" stroke-width=".7"/><rect x="14.500" y="13" width="3.500" height="3.500" fill="#fff4a0" stroke="#b0a040" stroke-width=".7"/><path d="M6 5h6M6 15h6" stroke="#000" stroke-width="1.300"/><path d="M11 2.500l3 2.500-3 2.500zM11 12.500l3 2.500-3 2.500z" fill="#000"/></svg>
<svg style="left:841.5px;top:47px" width="20" height="20" viewBox="0 0 20 20"><path d="M6 1v18M11 1v18M16 3v16M2 6h17M2 11h17M4 16h15" stroke="#a6a6a6" stroke-width="1.300"/><path d="M2 14l3 3 7-7" stroke="#a6a6a6" stroke-width="2.500" fill="none"/></svg>
<svg style="left:868.5px;top:47px" width="20" height="20" viewBox="0 0 20 20"><rect x="2" y="2" width="16" height="16" fill="#a3a3a3"/></svg>
<svg style="left:896px;top:47px" width="20" height="20" viewBox="0 0 20 20"><path d="M10 2l6.500 3.500v8L10 18l-6.500-4.500v-8z" fill="#b4b4b4" stroke="#a0a0a0" stroke-dasharray="1.500 1" stroke-width="1"/><path d="M10 9.500v8M4 6l6 3.500 6-3.500" stroke="#d4d4d8" fill="none"/><path d="M10 9.500l5-3v7l-5 3.500z" fill="#9c9c9c"/></svg>
<svg style="left:923px;top:47px" width="20" height="20" viewBox="0 0 20 20"><rect x="1.500" y="2.500" width="10" height="9" fill="#000" stroke="#b08800" stroke-width="1.200"/><rect x="3" y="4" width="3" height="3" fill="#f0d020"/><path d="M5 10l5-7" stroke="#f0d020" stroke-width="1.300"/><rect x="8" y="9" width="10.500" height="9.500" fill="#000" stroke="#f0d020" stroke-width="1.300" stroke-dasharray="2 1"/><rect x="10.500" y="11.500" width="5.500" height="5" fill="#201800"/></svg>
<svg style="left:957.5px;top:47px" width="20" height="20" viewBox="0 0 20 20"><path d="M3 5c0-3 3-4 5-3 2-1.500 5-1.500 7 0 2-.5 3.500 1 3 3.500 1 4-.5 8-2 10-2 2.500-7 3-9.500 1C3.500 14 2 9 3 5z" fill="#a8a8a8"/><path d="M8 3c2 1 4 1 6 0l-1 3c-1 .8-3 .8-4 0z" fill="#d8d8d8"/><circle cx="15.500" cy="5" r="1.200" fill="#e8e8e8"/></svg>
<div style="left:153.5px;top:47px;width:1px;height:21px;background:#8e93a3;"></div>
<div style="left:154.5px;top:47px;width:1px;height:21px;background:rgba(255,255,255,.8);"></div>
<div style="left:275.5px;top:47px;width:1px;height:21px;background:#8e93a3;"></div>
<div style="left:276.5px;top:47px;width:1px;height:21px;background:rgba(255,255,255,.8);"></div>
<div style="left:392px;top:47px;width:1px;height:21px;background:#8e93a3;"></div>
<div style="left:393px;top:47px;width:1px;height:21px;background:rgba(255,255,255,.8);"></div>
<div style="left:508px;top:47px;width:1px;height:21px;background:#8e93a3;"></div>
<div style="left:509px;top:47px;width:1px;height:21px;background:rgba(255,255,255,.8);"></div>
<div style="left:546.5px;top:47px;width:1px;height:21px;background:#8e93a3;"></div>
<div style="left:547.5px;top:47px;width:1px;height:21px;background:rgba(255,255,255,.8);"></div>
<div style="left:582px;top:47px;width:1px;height:21px;background:#8e93a3;"></div>
<div style="left:583px;top:47px;width:1px;height:21px;background:rgba(255,255,255,.8);"></div>
<div style="left:725px;top:47px;width:1px;height:21px;background:#8e93a3;"></div>
<div style="left:726px;top:47px;width:1px;height:21px;background:rgba(255,255,255,.8);"></div>
<div style="left:949px;top:47px;width:1px;height:21px;background:#8e93a3;"></div>
<div style="left:950px;top:47px;width:1px;height:21px;background:rgba(255,255,255,.8);"></div>
<svg style="left:12.75px;top:105.05px" width="17.5" height="17.5" viewBox="0 0 16 16"><circle cx="6.500" cy="6" r="4.800" fill="#fff" stroke="#000" stroke-width="1.500"/><path d="M10 9.500l5 5.500" stroke="#000" stroke-width="2.200"/><path d="M4 6h5" stroke="#d01818" stroke-width="1.300"/></svg>
<svg style="left:36.25px;top:105.05px" width="17.5" height="17.5" viewBox="0 0 16 16"><circle cx="6.500" cy="6" r="4.800" fill="#fff" stroke="#000" stroke-width="1.500"/><path d="M10 9.500l5 5.500" stroke="#000" stroke-width="2.200"/><path d="M4 6h5M6.500 3.500v5" stroke="#d01818" stroke-width="1.300"/></svg>
<svg style="left:59.75px;top:105.05px" width="17.5" height="17.5" viewBox="0 0 16 16"><rect x="1" y="1" width="14" height="14" fill="#08180c"/><path d="M3 5h5M5.500 2.500v5" stroke="#c8e020" stroke-width="1.300"/><rect x="9.500" y="3.500" width="4.500" height="2.500" fill="none" stroke="#e02828" stroke-width="1.300"/><rect x="2" y="10.500" width="3" height="3" fill="none" stroke="#60e060" stroke-width="1.200"/><path d="M10.500 8l1 2 2 .5-2 .8-.8 2-.8-2-2-.8 2-.5z" fill="#f0e040"/><circle cx="7.500" cy="13" r=".7" fill="#f0e040"/><circle cx="13.500" cy="13.500" r=".7" fill="#f0e040"/></svg>
<svg style="left:82.25px;top:105.05px" width="17.5" height="17.5" viewBox="0 0 16 16"><circle cx="8" cy="8" r="6.800" fill="#fff" stroke="#000" stroke-width="1.500"/><ellipse cx="8" cy="8" rx="3" ry="6.800" fill="none" stroke="#000" stroke-width="1.100"/><path d="M1.500 8h13M8 1.200v13.600M2.500 4.500h11M2.500 11.500h11" stroke="#000" stroke-width="1.100"/></svg>
<svg style="left:103.75px;top:105.05px" width="17.5" height="17.5" viewBox="0 0 16 16"><text x="0" y="6.500" font-family="Liberation Sans,sans-serif" font-weight="bold" font-size="7" fill="#c81420" textLength="13">UGC</text><text x="0" y="12" font-family="Liberation Sans,sans-serif" font-weight="bold" font-size="7" fill="#101080">R</text><text x="4" y="15.500" font-family="Liberation Sans,sans-serif" font-weight="bold" font-size="7.500" fill="#101080">k</text><text x="9.500" y="15" font-family="Liberation Sans,sans-serif" font-weight="bold" font-size="9" fill="#000">?</text></svg>
<svg style="left:127.75px;top:105.05px" width="17.5" height="17.5" viewBox="0 0 16 16"><path d="M2 2l8 7" stroke="#d01820" stroke-width="2.800"/><path d="M1.500 1l9.500 8.500" stroke="#000" stroke-width="1" transform="translate(1.500 -1.200)"/><path d="M9 8l-4 7h2l2.500-4 2.500 4h2.500l-3.500-7.500zM3 15h11" fill="#000" stroke="#000" stroke-width="1.200"/></svg>
<svg style="left:151.25px;top:105.05px" width="17.5" height="17.5" viewBox="0 0 16 16"><path d="M4 1.500h6l3 3V9H4z" fill="#fff" stroke="#000" stroke-width="1.200"/><path d="M6 4h3M6 6.500h5" stroke="#000" stroke-width="1"/><rect x="1.500" y="9" width="14" height="5.500" fill="#fff" stroke="#000" stroke-width="1.300"/><path d="M1.500 12h14" stroke="#000" stroke-width="1"/><rect x="11.500" y="10" width="2" height="1" fill="#000"/></svg>
<svg style="left:173.75px;top:105.05px" width="17.5" height="17.5" viewBox="0 0 16 16"><circle cx="8" cy="3.500" r="2.800" fill="#000"/><circle cx="8" cy="9" r="2.300" fill="#000"/><circle cx="8" cy="14" r="1.800" fill="#000"/></svg>
<svg style="left:196.75px;top:105.05px" width="17.5" height="17.5" viewBox="0 0 16 16"><path d="M13.500 4.500A6.500 6.500 0 1 0 14.500 9" fill="none" stroke="#e01818" stroke-width="2"/><path d="M10.500 1l5 1-1.500 4.500z" fill="#e01818"/><rect x="7" y="3" width="2.200" height="6.500" fill="#000"/><rect x="7" y="11" width="2.200" height="2.200" fill="#000"/></svg>
<svg style="left:220.25px;top:105.05px" width="17.5" height="17.5" viewBox="0 0 16 16"><rect x="1" y="4.500" width="3.500" height="9" fill="#000"/><rect x="4.500" y="5.500" width="2" height="7" fill="#208080"/><path d="M6.500 5.500h4l1-1h4v2.500h-4M6.500 12.500h6v-2h1.500V8.500h-3" fill="#f4f080" stroke="#000" stroke-width="1"/><path d="M6.500 5.500v7" stroke="#000"/></svg>
<svg style="left:243.75px;top:105.05px" width="17.5" height="17.5" viewBox="0 0 16 16"><path d="M2 14L11 2l3.500 1.500L7 15z" fill="#e01838" stroke="#601020" stroke-width=".8"/><path d="M5 10l4-4 2 1-4 5z" fill="#fff"/><path d="M2 14l2-4 3.500 4.500z" fill="#e8d020"/><path d="M1.500 15.500l2-3" stroke="#2040c0" stroke-width="1.500"/><path d="M11 2l3.500 1.500 1-2z" fill="#801020"/></svg>
<svg style="left:266.75px;top:105.05px" width="17.5" height="17.5" viewBox="0 0 16 16"><path d="M4.500 2.500L12 8l-7.500 5.500z" fill="#000"/></svg>
<svg style="left:290.25px;top:105.05px" width="17.5" height="17.5" viewBox="0 0 16 16"><rect x="1.500" y="3.500" width="13" height="10" fill="#fff" stroke="#000" stroke-width="1.200"/><rect x="1.500" y="3.500" width="13" height="2.500" fill="#182890"/><path d="M5.800 6v7.500M10.200 6v7.500M1.500 9.800h13" stroke="#000" stroke-width="1"/></svg>
<svg style="left:312.75px;top:105.05px" width="17.5" height="17.5" viewBox="0 0 16 16"><ellipse cx="6.500" cy="7.500" rx="5.500" ry="4" fill="#fff" stroke="#000" stroke-width="1.100"/><circle cx="10.500" cy="7.500" r="3.300" fill="none" stroke="#d01828" stroke-width="1.200"/><rect x="9.500" y="6.500" width="2" height="2" fill="#000"/><path d="M6.500 8v7.500M14 9v6.500" stroke="#d01828" stroke-width="1.200"/></svg>
<svg style="left:335.75px;top:105.05px" width="17.5" height="17.5" viewBox="0 0 16 16"><rect x="0.500" y="0.500" width="15" height="15" rx="2" fill="#000"/><circle cx="8" cy="8" r="5.500" fill="none" stroke="#f0e820" stroke-width="1.300"/><path d="M1.500 8h4.500M10 8h4.500M8 1.500V6M8 10v4.500" stroke="#f0e820" stroke-width="1.300"/></svg>
<div style="left:358px;top:104px;width:1px;height:17px;background:#a0a0a0;"></div>
<div style="left:377px;top:103px;width:20px;height:20px;border:1px solid #86a6c2;border-radius:3px;background:linear-gradient(#bcdcf2 0%,#9acbee 45%,#6fb4e4 55%,#7cc0ec 100%);"></div>
<div style="left:400px;top:103px;width:22.5px;height:20px;border:1px solid #b4b4b4;border-radius:3px;background:linear-gradient(#efefef,#e2e2e2);"></div>
<div style="left:425.5px;top:103px;width:17px;height:20px;border:1px solid #b4b4b4;border-radius:3px;background:linear-gradient(#efefef,#e2e2e2);"></div>
<div style="left:445.5px;top:103px;width:17.5px;height:20px;border:1px solid #b4b4b4;border-radius:3px;background:linear-gradient(#efefef,#e2e2e2);"></div>
<svg style="left:379px;top:105px" width="16" height="16" viewBox="0 0 16 16"><path d="M3.500 1.500l9 7.500-4 .3 2.500 4.500-1.800 1-2.500-4.600-3 2.800z" fill="#fff" stroke="#000" stroke-width="1"/></svg>
<svg style="left:403px;top:105px" width="16" height="16" viewBox="0 0 16 16"><path d="M3.500 2h3l.5 3 1.500 0 .5-3h3l2.500 8v4h-5v-4h-2v4H2.500v-4z" fill="#000"/><path d="M4 11.500h2.500M10.500 11.500H13" stroke="#888" stroke-width="1"/></svg>
<svg style="left:426px;top:105px" width="16" height="16" viewBox="0 0 16 16"><path d="M8 .5v15M1 8h14" stroke="#000" stroke-width="1.200"/><rect x="6" y="6" width="4" height="4" fill="#888" stroke="#000" stroke-width=".8"/></svg>
<svg style="left:446.5px;top:105px" width="16" height="16" viewBox="0 0 16 16"><path d="M1.500 2.500L13 14l1.500-1.500" fill="none" stroke="#000" stroke-width="1.400"/><path d="M4 5l3-3M6.500 7.500l2-2M9 10l3-3M11.500 12.500l2-2" stroke="#000" stroke-width="1"/></svg>
</body></html>
